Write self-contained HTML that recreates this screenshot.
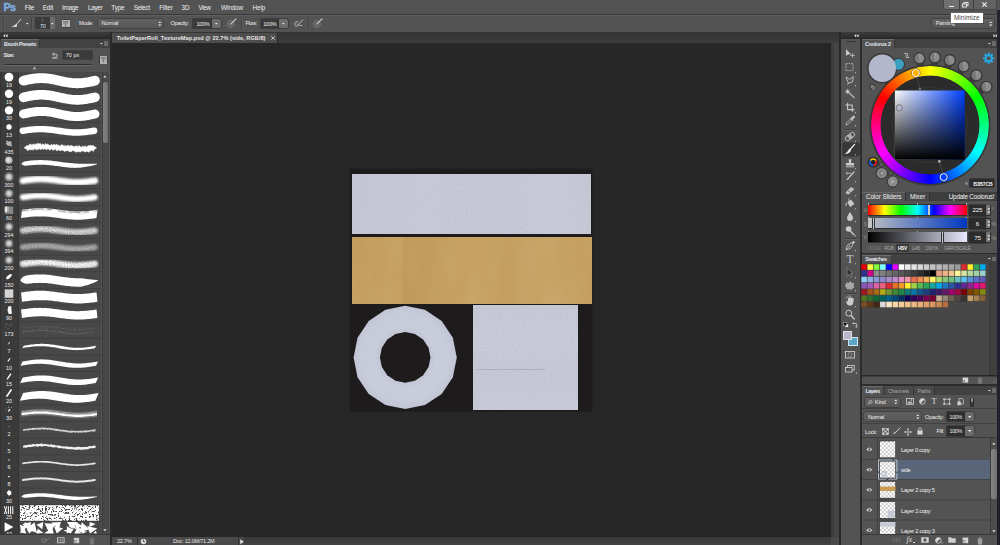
<!DOCTYPE html>
<html><head><meta charset="utf-8"><title>Photoshop</title><style>
*{margin:0;padding:0;box-sizing:border-box}
html,body{width:1000px;height:545px;overflow:hidden;background:#272727;font-family:"Liberation Sans",sans-serif;}
body{position:relative;color:#e6e6e6;font-size:6px;line-height:1}
.a{position:absolute}
.t{position:absolute;white-space:nowrap;color:#e8e8e8;font-size:6px;line-height:7px}
.b{font-weight:bold}
.pn{position:absolute;background:#535353}
.tb{position:absolute;background:#424242}
.box{position:absolute;background:#3a3a3a;box-shadow:0 0 0 0.5px #2c2c2c}
.btn{position:absolute;background:#6a6a6a;box-shadow:0 0 0 0.5px #2e2e2e}
.dd{position:absolute;background:linear-gradient(#626262,#565656);box-shadow:0 0 0 0.5px #303030;border-radius:1.5px}
svg{position:absolute;overflow:visible}
</style></head><body>
<div class="a" style="left:0px;top:0px;width:1000px;height:14.5px;background:#535353;"></div>
<div class="t" style="left:3.6px;top:1.6px;font-size:10.8px;line-height:11px;font-weight:bold;color:#7fade0;letter-spacing:-0.9px;-webkit-text-stroke:0.4px #7fade0">Ps</div>
<div class="t" style="left:24.8px;top:3.7px;font-size:6.4px;letter-spacing:-0.278px;color:#efefef;line-height:8px">File</div>
<div class="t" style="left:42.7px;top:3.7px;font-size:6.4px;letter-spacing:-0.132px;color:#efefef;line-height:8px">Edit</div>
<div class="t" style="left:62px;top:3.7px;font-size:6.4px;letter-spacing:-0.278px;color:#efefef;line-height:8px">Image</div>
<div class="t" style="left:87.9px;top:3.7px;font-size:6.4px;letter-spacing:-0.282px;color:#efefef;line-height:8px">Layer</div>
<div class="t" style="left:111.3px;top:3.7px;font-size:6.4px;letter-spacing:-0.194px;color:#efefef;line-height:8px">Type</div>
<div class="t" style="left:133.8px;top:3.7px;font-size:6.4px;letter-spacing:-0.331px;color:#efefef;line-height:8px">Select</div>
<div class="t" style="left:159.2px;top:3.7px;font-size:6.4px;letter-spacing:-0.120px;color:#efefef;line-height:8px">Filter</div>
<div class="t" style="left:181.6px;top:3.7px;font-size:6.4px;letter-spacing:-0.091px;color:#efefef;line-height:8px">3D</div>
<div class="t" style="left:198.5px;top:3.7px;font-size:6.4px;letter-spacing:-0.439px;color:#efefef;line-height:8px">View</div>
<div class="t" style="left:221px;top:3.7px;font-size:6.4px;letter-spacing:-0.127px;color:#efefef;line-height:8px">Window</div>
<div class="t" style="left:252.5px;top:3.7px;font-size:6.4px;letter-spacing:-0.141px;color:#efefef;line-height:8px">Help</div>
<div class="a" style="left:943.5px;top:0px;width:52.5px;height:9px;background:#626262;box-shadow:0 0 0 0.5px #3a3a3a;border-top:0;border-radius:0 0 2px 2px"></div>
<div class="a" style="left:944px;top:0px;width:14.5px;height:8.6px;background:#707070;border-radius:0 0 0 2px"></div>
<div class="a" style="left:958.5px;top:0px;width:0.5px;height:9px;background:#3e3e3e;"></div>
<div class="a" style="left:972.5px;top:0px;width:0.5px;height:9px;background:#3e3e3e;"></div>
<div class="a" style="left:948.5px;top:5.5px;width:5px;height:1.2px;background:#f0f0f0;"></div>
<svg style="left:962px;top:2px" width="7" height="6" viewBox="0 0 7 6"><rect x="2" y="0.5" width="4" height="3" fill="none" stroke="#f0f0f0" stroke-width="0.9"/><rect x="0.5" y="2" width="4" height="3" fill="#626262" stroke="#f0f0f0" stroke-width="0.9"/></svg>
<svg style="left:981.5px;top:2px" width="5" height="5" viewBox="0 0 5 5"><path d="M0.3,0.3 L4.7,4.7 M4.7,0.3 L0.3,4.7" stroke="#f4f4f4" stroke-width="1.1"/></svg>
<div class="a" style="left:0px;top:14.3px;width:1000px;height:0.7px;background:#3a3a3a;"></div>
<div class="a" style="left:0px;top:15px;width:1000px;height:17px;background:#535353;"></div>
<div class="a" style="left:0px;top:15px;width:1000px;height:0.5px;background:#5e5e5e;"></div>
<div class="a" style="left:0px;top:31.7px;width:1000px;height:0.6px;background:#2e2e2e;"></div>
<div class="a" style="left:3.1px;top:18px;width:0.8px;height:11px;background:#424242;"></div>
<div class="a" style="left:3.9px;top:18px;width:0.4px;height:11px;background:#5b5b5b;"></div>
<svg style="left:0;top:0" width="30" height="32" viewBox="0 0 30 32"><path d="M20.8,19.3 L16.4,24.4" stroke="#d8d8d8" stroke-width="1.0" stroke-linecap="round"/><path d="M11.2,26.9 L16.6,26.7 C17.3,25.7 17.2,24.6 16.3,23.7 C15,25 13.4,26 11.2,26.9Z" fill="#e4e4e4"/></svg>
<svg style="left:25.6px;top:22.6px" width="3" height="2"><path d="M0,0 L2.6,0 L1.3,1.6Z" fill="#eee"/></svg>
<div class="a" style="left:31.0px;top:18px;width:0.8px;height:11px;background:#424242;"></div>
<div class="a" style="left:31.8px;top:18px;width:0.4px;height:11px;background:#5b5b5b;"></div>
<div class="a" style="left:35px;top:17.1px;width:19.6px;height:12.2px;background:#3b3b3b;border-radius:1.2px"></div>
<div class="a" style="left:50px;top:17.1px;width:4.6px;height:12.2px;background:#6c6c6c;border-radius:0 1.2px 1.2px 0"></div>
<svg style="left:50.9px;top:22.6px" width="3" height="2"><path d="M0,0 L2.6,0 L1.3,1.6Z" fill="#f4f4f4"/></svg>
<div class="t" style="left:39.9px;top:23.3px;font-size:5.4px;letter-spacing:-0.203px;color:#dde6f6;">70</div>
<div class="a" style="left:42.4px;top:18.3px;width:0.7px;height:3.6px;background:#555;"></div>
<div class="a" style="left:41.2px;top:20.4px;width:3.1px;height:0.6px;background:#555;"></div>
<div class="a" style="left:61.8px;top:19px;width:8.4px;height:8.5px;background:#3c3c3c;border-radius:0.8px"></div>
<div class="a" style="left:62.4px;top:19.6px;width:7.2px;height:7.3px;background:#b4b4b4;"></div>
<svg style="left:62.4px;top:19.6px" width="7.2" height="7.3" viewBox="0 0 7.2 7.3"><path d="M1,1.6 H6.2 M2,2.4 V4 M3.6,2.2 V5.6 M5.2,2.4 V4 M2.8,5.8 H4.4" stroke="#4a4a4a" stroke-width="0.6" fill="none"/></svg>
<div class="a" style="left:75.5px;top:18px;width:0.8px;height:11px;background:#424242;"></div>
<div class="a" style="left:76.3px;top:18px;width:0.4px;height:11px;background:#5b5b5b;"></div>
<div class="t" style="left:79.1px;top:19.8px;font-size:5.7px;letter-spacing:-0.368px;color:#ececec;">Mode:</div>
<div class="dd" style="left:97.8px;top:18.9px;width:65.6px;height:9.1px"></div>
<div class="t" style="left:101.5px;top:20.2px;font-size:5.6px;letter-spacing:-0.258px;color:#eaeaea;">Normal</div>
<svg style="left:158.4px;top:20.6px" width="4" height="6"><path d="M0.3,2 L1.8,0.4 L3.3,2Z M0.3,3.6 L1.8,5.2 L3.3,3.6Z" fill="#eee"/></svg>
<div class="t" style="left:170.6px;top:19.8px;font-size:5.7px;letter-spacing:-0.338px;color:#ececec;">Opacity:</div>
<div class="a" style="left:193px;top:18.9px;width:19px;height:8.9px;background:#3a3a3a;box-shadow:0 0 0 0.5px #2a2a2a"></div>
<div class="t" style="left:196.4px;top:20.5px;font-size:5.5px;letter-spacing:-0.267px;color:#f0f0f0;">100%</div>
<div class="a" style="left:212px;top:18.9px;width:9px;height:8.9px;background:#6c6c6c;box-shadow:0 0 0 0.5px #2a2a2a;border-radius:0 1.5px 1.5px 0"></div>
<svg style="left:215.2px;top:22.6px" width="3" height="2"><path d="M0,0 L2.6,0 L1.3,1.6Z" fill="#f4f4f4"/></svg>
<svg style="left:227px;top:18.4px" width="10" height="10" viewBox="0 0 10 10"><circle cx="3.8" cy="6" r="3.3" fill="none" stroke="#b4b4b4" stroke-width="0.7" stroke-dasharray="1.1 0.55"/><circle cx="3.8" cy="6" r="1.4" fill="none" stroke="#9c9c9c" stroke-width="0.5"/><path d="M3.8,6 L9,0.8" stroke="#d4d4d4" stroke-width="1.05" stroke-linecap="round"/></svg>
<div class="a" style="left:240.8px;top:18px;width:0.8px;height:11px;background:#424242;"></div>
<div class="a" style="left:241.60000000000002px;top:18px;width:0.4px;height:11px;background:#5b5b5b;"></div>
<div class="t" style="left:245.5px;top:19.8px;font-size:5.7px;letter-spacing:-0.484px;color:#ececec;">Flow:</div>
<div class="a" style="left:260.8px;top:18.9px;width:18.4px;height:8.9px;background:#3a3a3a;box-shadow:0 0 0 0.5px #2a2a2a"></div>
<div class="t" style="left:263.3px;top:20.5px;font-size:5.5px;letter-spacing:-0.267px;color:#f0f0f0;">100%</div>
<div class="a" style="left:279.2px;top:18.9px;width:8.8px;height:8.9px;background:#6c6c6c;box-shadow:0 0 0 0.5px #2a2a2a;border-radius:0 1.5px 1.5px 0"></div>
<svg style="left:282.3px;top:22.6px" width="3" height="2"><path d="M0,0 L2.6,0 L1.3,1.6Z" fill="#f4f4f4"/></svg>
<svg style="left:294px;top:18.6px" width="10" height="9.5" viewBox="0 0 10 9.5"><path d="M3.6,2.6 C1.6,2.4 0.5,3.9 0.7,5.4 C0.9,6.9 2.4,7.6 3.8,6.9 M3.4,5 C4.4,6.4 5.8,6.6 7.8,6.4 M4.4,5.4 L8.8,0.8" stroke="#d6d6d6" stroke-width="0.8" fill="none" stroke-linecap="round"/></svg>
<div class="a" style="left:308.0px;top:18px;width:0.8px;height:11px;background:#424242;"></div>
<div class="a" style="left:308.8px;top:18px;width:0.4px;height:11px;background:#5b5b5b;"></div>
<svg style="left:313.2px;top:18.4px" width="10" height="10" viewBox="0 0 10 10"><circle cx="3.8" cy="6" r="3.3" fill="none" stroke="#b4b4b4" stroke-width="0.7" stroke-dasharray="1.1 0.55"/><circle cx="3.8" cy="6" r="1.4" fill="none" stroke="#9c9c9c" stroke-width="0.5"/><path d="M3.8,6 L9,0.8" stroke="#d4d4d4" stroke-width="1.05" stroke-linecap="round"/></svg>
<div class="dd" style="left:932px;top:18.8px;width:62px;height:9.4px"></div>
<div class="t" style="left:935.8px;top:20.4px;font-size:5.6px;letter-spacing:-0.180px;color:#eaeaea;">Painting</div>
<svg style="left:988.5px;top:20.6px" width="4" height="6"><path d="M0.3,2 L1.8,0.4 L3.3,2Z M0.3,3.6 L1.8,5.2 L3.3,3.6Z" fill="#eee"/></svg>
<div class="a" style="left:951px;top:13px;width:31.5px;height:9.5px;background:#ffffff;box-shadow:0 0 0 0.5px #767676,0.6px 0.6px 1px rgba(0,0,0,.45)"></div>
<div class="t" style="left:954px;top:14.1px;font-size:6.4px;letter-spacing:0.044px;color:#4a4a4a;">Minimize</div>
<div class="a" style="left:997.6px;top:9.6px;width:2.4px;height:23px;background:#25232c;"></div>
<div class="a" style="left:0px;top:32.3px;width:110px;height:6.2px;background:#333;background:linear-gradient(#3c3c3c,#2c2c2c)"></div>
<svg style="left:3px;top:34px" width="5" height="3.4" viewBox="0 0 5 3.4"><path d="M2.2,0 L0.2,1.7 L2.2,3.4Z M4.6,0 L2.6,1.7 L4.6,3.4Z" fill="#e0e0e0"/></svg>
<div class="a" style="left:0px;top:38.5px;width:110px;height:9.5px;background:#424242;"></div>
<div class="a" style="left:0.5px;top:39px;width:39.7px;height:9.2px;background:#535353;border-radius:1px 1px 0 0;border-top:0.5px solid #6a6a6a;border-right:0.5px solid #383838"></div>
<div class="t" style="left:4.1px;top:41px;font-size:5.4px;letter-spacing:-0.355px;color:#e2e8f2;font-weight:bold;">Brush Presets</div>
<svg style="left:100.3px;top:42.6px" width="3" height="2"><path d="M0,0 L2.6,0 L1.3,1.6Z" fill="#ddd"/></svg>
<div class="a" style="left:104px;top:41.2px;width:4px;height:4.6px;background:#6a6a6a;"></div>
<div class="a" style="left:0px;top:48px;width:110px;height:497px;background:#535353;"></div>
<div class="t" style="left:3.6px;top:51.6px;font-size:5.4px;letter-spacing:-0.441px;color:#e8e8e8;font-weight:bold;">Size:</div>
<svg style="left:50.5px;top:50.5px" width="8" height="8" viewBox="0 0 8 8"><path d="M2.2,3.2 H5 C6.6,3.2 6.6,6.4 5,6.4 H1.6" stroke="#e0e0e0" stroke-width="0.75" fill="none"/><path d="M3.2,1.6 L1.4,3.2 L3.2,4.8" stroke="#e0e0e0" stroke-width="0.75" fill="none"/><path d="M1,7.4 H7" stroke="#d0d0d0" stroke-width="0.5"/></svg>
<div class="a" style="left:63px;top:50.5px;width:29px;height:8.4px;background:#3a3a3a;box-shadow:0 0 0 0.5px #2e2e2e"></div>
<div class="t" style="left:65.8px;top:52.1px;font-size:5.5px;letter-spacing:0.009px;color:#f0f0f0;">70 px</div>
<div class="a" style="left:99px;top:55.8px;width:9px;height:8.6px;background:#3c3c3c;border-radius:0.8px"></div>
<div class="a" style="left:99.6px;top:56.4px;width:7.8px;height:7.4px;background:#b4b4b4;"></div>
<svg style="left:99.8px;top:56.4px" width="7.2" height="7.3" viewBox="0 0 7.2 7.3"><path d="M1,1.6 H6.2 M2,2.4 V4 M3.6,2.2 V5.6 M5.2,2.4 V4 M2.8,5.8 H4.4" stroke="#4a4a4a" stroke-width="0.6" fill="none"/></svg>
<div class="a" style="left:4px;top:64.2px;width:88px;height:0.9px;background:#2e2e2e;"></div>
<div class="a" style="left:4px;top:65.1px;width:88px;height:0.5px;background:#686868;"></div>
<svg style="left:31.5px;top:65.6px" width="5" height="4" viewBox="0 0 5 4"><path d="M2.5,0.2 L4.6,3.4 H0.4Z" fill="#b4b4b4" stroke="#444" stroke-width="0.3"/></svg>
<div class="a" style="left:0.8px;top:72.4px;width:100.7px;height:461.6px;background:#484848;"></div>
<div class="a" style="left:0px;top:72.4px;width:17.7px;height:461.6px;background:#3b3b3b;"></div>
<div class="a" style="left:0px;top:72.4px;width:0.8px;height:461.6px;background:#333;"></div>
<div class="a" style="left:17.7px;top:72.4px;width:0.5px;height:461.6px;background:#353535;"></div>
<div class="a" style="left:101.5px;top:72.4px;width:7.5px;height:461.6px;background:#484848;border-left:0.5px solid #3a3a3a"></div>
<svg style="left:103.3px;top:74.6px" width="4" height="3"><path d="M0.2,2.4 L1.9,0.4 L3.6,2.4Z" fill="#e0e0e0"/></svg>
<svg style="left:103.3px;top:529.3px" width="4" height="3"><path d="M0.2,0.3 L1.9,2.3 L3.6,0.3Z" fill="#e0e0e0"/></svg>
<div class="a" style="left:102.6px;top:82px;width:5.8px;height:61px;background:#7a7a7a;border-radius:2px;background:linear-gradient(90deg,#848484,#707070)"></div>
<svg width="0" height="0" style="left:0;top:0"><defs>
<filter id="sf" x="-10%" y="-80%" width="120%" height="260%"><feGaussianBlur stdDeviation="1.25"/></filter>
<filter id="sf2" x="-10%" y="-80%" width="120%" height="260%"><feGaussianBlur stdDeviation="0.9"/></filter>
<filter id="rough" x="-5%" y="-50%" width="110%" height="200%"><feTurbulence type="fractalNoise" baseFrequency="0.5" numOctaves="2" seed="3"/><feDisplacementMap in="SourceGraphic" scale="3.2" xChannelSelector="R" yChannelSelector="G"/></filter>
<filter id="rough2" x="-5%" y="-50%" width="110%" height="200%"><feTurbulence type="fractalNoise" baseFrequency="1.1" numOctaves="1" seed="5"/><feDisplacementMap in="SourceGraphic" scale="1.5"/></filter>
<filter id="speck" x="-5%" y="-60%" width="110%" height="220%"><feGaussianBlur stdDeviation="1.25" result="b"/><feTurbulence type="fractalNoise" baseFrequency="0.95" numOctaves="2" seed="8" result="n"/><feColorMatrix in="n" type="matrix" values="0 0 0 0 1  0 0 0 0 1  0 0 0 0 1  1.3 0 0 0 0.12" result="m"/><feComposite in="b" in2="m" operator="in"/></filter>
<filter id="tex" x="0" y="0" width="100%" height="100%"><feTurbulence type="fractalNoise" baseFrequency="0.55" numOctaves="3" seed="11" result="n"/><feColorMatrix in="n" type="matrix" values="0 0 0 0 1  0 0 0 0 1  0 0 0 0 1  9 0 0 0 -3.1"/><feComposite in2="SourceGraphic" operator="in"/></filter>
</defs></svg>
<div class="a" style="left:0;top:0;width:110px;height:534px;overflow:hidden"><svg style="left:0;top:0" width="110" height="534" viewBox="0 0 110 534"><rect x="0.8" y="88.63" width="100.7" height="0.6" fill="#3a3a3a"/><circle cx="9.0" cy="77.10" r="4.4" fill="#fff"/><text x="9.0" y="87.00" font-size="5.3" fill="#f0f0f0" text-anchor="middle" font-family="Liberation Sans, sans-serif">19</text><path transform="translate(0,72.40)" d="M23.50,8.30 L24.99,7.97 L26.48,7.64 L27.97,7.32 L29.46,7.03 L30.95,6.75 L32.44,6.50 L33.93,6.28 L35.42,6.09 L36.91,5.94 L38.40,5.84 L39.89,5.77 L41.38,5.75 L42.86,5.77 L44.35,5.84 L45.84,5.94 L47.33,6.09 L48.82,6.28 L50.31,6.50 L51.80,6.75 L53.29,7.03 L54.78,7.32 L56.27,7.64 L57.76,7.97 L59.25,8.30 L60.74,8.63 L62.23,8.96 L63.72,9.28 L65.21,9.58 L66.70,9.85 L68.19,10.10 L69.68,10.32 L71.17,10.51 L72.66,10.66 L74.15,10.76 L75.64,10.83 L77.12,10.85 L78.61,10.83 L80.10,10.76 L81.59,10.66 L83.08,10.51 L84.57,10.32 L86.06,10.10 L87.55,9.85 L89.04,9.58 L90.53,9.28 L92.02,8.96 L93.51,8.63 L95.00,8.30" stroke="#fff" stroke-width="9.8" stroke-linecap="round" stroke-linejoin="round" fill="none"/><rect x="0.8" y="105.26" width="100.7" height="0.6" fill="#3a3a3a"/><circle cx="9.0" cy="93.73" r="4.2" fill="#fff"/><text x="9.0" y="103.63" font-size="5.3" fill="#f0f0f0" text-anchor="middle" font-family="Liberation Sans, sans-serif">19</text><path transform="translate(0,89.03)" d="M23.50,8.30 L24.99,7.97 L26.48,7.64 L27.97,7.32 L29.46,7.03 L30.95,6.75 L32.44,6.50 L33.93,6.28 L35.42,6.09 L36.91,5.94 L38.40,5.84 L39.89,5.77 L41.38,5.75 L42.86,5.77 L44.35,5.84 L45.84,5.94 L47.33,6.09 L48.82,6.28 L50.31,6.50 L51.80,6.75 L53.29,7.03 L54.78,7.32 L56.27,7.64 L57.76,7.97 L59.25,8.30 L60.74,8.63 L62.23,8.96 L63.72,9.28 L65.21,9.58 L66.70,9.85 L68.19,10.10 L69.68,10.32 L71.17,10.51 L72.66,10.66 L74.15,10.76 L75.64,10.83 L77.12,10.85 L78.61,10.83 L80.10,10.76 L81.59,10.66 L83.08,10.51 L84.57,10.32 L86.06,10.10 L87.55,9.85 L89.04,9.58 L90.53,9.28 L92.02,8.96 L93.51,8.63 L95.00,8.30" stroke="#fff" stroke-width="9.6" stroke-linecap="round" stroke-linejoin="round" fill="none"/><rect x="0.8" y="121.89" width="100.7" height="0.6" fill="#3a3a3a"/><circle cx="9.0" cy="110.36" r="4.2" fill="#fff"/><text x="9.0" y="120.26" font-size="5.3" fill="#f0f0f0" text-anchor="middle" font-family="Liberation Sans, sans-serif">30</text><path transform="translate(0,105.66)" d="M23.50,8.30 L24.99,7.97 L26.48,7.64 L27.97,7.32 L29.46,7.03 L30.95,6.75 L32.44,6.50 L33.93,6.28 L35.42,6.09 L36.91,5.94 L38.40,5.84 L39.89,5.77 L41.38,5.75 L42.86,5.77 L44.35,5.84 L45.84,5.94 L47.33,6.09 L48.82,6.28 L50.31,6.50 L51.80,6.75 L53.29,7.03 L54.78,7.32 L56.27,7.64 L57.76,7.97 L59.25,8.30 L60.74,8.63 L62.23,8.96 L63.72,9.28 L65.21,9.58 L66.70,9.85 L68.19,10.10 L69.68,10.32 L71.17,10.51 L72.66,10.66 L74.15,10.76 L75.64,10.83 L77.12,10.85 L78.61,10.83 L80.10,10.76 L81.59,10.66 L83.08,10.51 L84.57,10.32 L86.06,10.10 L87.55,9.85 L89.04,9.58 L90.53,9.28 L92.02,8.96 L93.51,8.63 L95.00,8.30" stroke="#fff" stroke-width="9.0" stroke-linecap="round" stroke-linejoin="round" fill="none"/><rect x="0.8" y="138.52" width="100.7" height="0.6" fill="#3a3a3a"/><circle cx="9.0" cy="126.99" r="2.7" fill="#fff"/><text x="9.0" y="136.89" font-size="5.3" fill="#f0f0f0" text-anchor="middle" font-family="Liberation Sans, sans-serif">13</text><path transform="translate(0,122.29)" d="M22.80,8.50 L24.29,8.28 L25.78,8.06 L27.26,7.85 L28.75,7.65 L30.24,7.47 L31.73,7.30 L33.21,7.15 L34.70,7.03 L36.19,6.93 L37.68,6.86 L39.16,6.81 L40.65,6.80 L42.14,6.81 L43.62,6.86 L45.11,6.93 L46.60,7.03 L48.09,7.15 L49.58,7.30 L51.06,7.47 L52.55,7.65 L54.04,7.85 L55.53,8.06 L57.01,8.28 L58.50,8.50 L59.99,8.72 L61.47,8.94 L62.96,9.15 L64.45,9.35 L65.94,9.53 L67.42,9.70 L68.91,9.85 L70.40,9.97 L71.89,10.07 L73.38,10.14 L74.86,10.19 L76.35,10.20 L77.84,10.19 L79.33,10.14 L80.81,10.07 L82.30,9.97 L83.79,9.85 L85.28,9.70 L86.76,9.53 L88.25,9.35 L89.74,9.15 L91.23,8.94 L92.71,8.72 L94.20,8.50" stroke="#fff" stroke-width="6.4" stroke-linecap="round" stroke-linejoin="round" fill="none"/><rect x="0.8" y="155.15" width="100.7" height="0.6" fill="#3a3a3a"/><g filter="url(#rough)"><circle cx="9.0" cy="143.62" r="2.4" fill="#b4b4b4"/><circle cx="7.0" cy="141.42" r="1" fill="#aaa"/><circle cx="11.2" cy="145.42" r="1" fill="#aaa"/><circle cx="10.6" cy="141.22" r="0.7" fill="#999"/></g><text x="9.0" y="153.52" font-size="5.3" fill="#f0f0f0" text-anchor="middle" font-family="Liberation Sans, sans-serif">435</text><path transform="translate(0,138.92)" d="M24.00,8.90 L24.81,8.36 L25.61,7.84 L26.42,6.95 L27.22,6.46 L28.03,6.95 L28.83,6.66 L29.64,5.33 L30.44,5.02 L31.25,6.55 L32.06,5.18 L32.86,6.21 L33.67,4.89 L34.47,6.25 L35.28,4.83 L36.08,5.54 L36.89,4.75 L37.69,4.46 L38.50,4.55 L39.31,4.97 L40.11,4.30 L40.92,5.45 L41.72,6.14 L42.53,4.87 L43.33,5.31 L44.14,5.89 L44.94,6.03 L45.75,4.40 L46.56,6.20 L47.36,4.93 L48.17,5.74 L48.97,6.01 L49.78,6.34 L50.58,6.29 L51.39,5.37 L52.19,6.06 L53.00,6.02 L53.81,5.44 L54.61,5.48 L55.42,6.63 L56.22,5.01 L57.03,6.91 L57.83,5.57 L58.64,7.15 L59.44,6.56 L60.25,7.30 L61.06,5.99 L61.86,5.88 L62.67,6.01 L63.47,6.99 L64.28,6.44 L65.08,7.85 L65.89,6.34 L66.69,7.67 L67.50,6.39 L68.31,6.32 L69.11,7.29 L69.92,7.02 L70.72,6.69 L71.53,6.64 L72.33,7.37 L73.14,6.75 L73.94,8.21 L74.75,7.41 L75.56,7.37 L76.36,6.79 L77.17,7.02 L77.97,8.66 L78.78,6.70 L79.58,6.89 L80.39,7.95 L81.19,8.60 L82.00,7.26 L82.81,7.52 L83.61,8.18 L84.42,7.05 L85.22,7.32 L86.03,7.64 L86.83,8.23 L87.64,6.99 L88.44,6.65 L89.25,6.73 L90.06,6.80 L90.86,6.28 L91.67,6.69 L92.47,6.74 L93.28,6.63 L94.08,7.32 L94.89,8.15 L95.69,8.11 L96.50,8.90 L96.50,8.90 L95.69,9.42 L94.89,10.50 L94.08,10.40 L93.28,12.61 L92.47,11.48 L91.67,11.16 L90.86,12.33 L90.06,11.60 L89.25,13.12 L88.44,13.21 L87.64,12.54 L86.83,12.67 L86.03,12.56 L85.22,13.02 L84.42,12.85 L83.61,12.34 L82.81,12.34 L82.00,11.74 L81.19,12.35 L80.39,13.34 L79.58,12.80 L78.78,12.59 L77.97,13.23 L77.17,12.42 L76.36,13.28 L75.56,13.28 L74.75,12.34 L73.94,11.64 L73.14,11.98 L72.33,11.57 L71.53,12.76 L70.72,12.69 L69.92,12.52 L69.11,12.71 L68.31,11.98 L67.50,11.54 L66.69,11.78 L65.89,12.38 L65.08,12.09 L64.28,12.61 L63.47,11.47 L62.67,11.40 L61.86,11.32 L61.06,11.35 L60.25,11.78 L59.44,11.49 L58.64,10.42 L57.83,11.92 L57.03,11.24 L56.22,11.64 L55.42,9.85 L54.61,10.75 L53.81,10.72 L53.00,11.59 L52.19,10.41 L51.39,10.18 L50.58,10.66 L49.78,11.27 L48.97,10.55 L48.17,9.83 L47.36,10.24 L46.56,10.91 L45.75,10.37 L44.94,9.87 L44.14,10.00 L43.33,10.77 L42.53,9.64 L41.72,10.07 L40.92,10.34 L40.11,10.95 L39.31,9.19 L38.50,10.43 L37.69,10.65 L36.89,10.54 L36.08,11.03 L35.28,9.91 L34.47,9.49 L33.67,11.37 L32.86,9.95 L32.06,11.41 L31.25,10.41 L30.44,11.13 L29.64,10.16 L28.83,11.45 L28.03,11.19 L27.22,11.52 L26.42,10.03 L25.61,9.53 L24.81,9.40 L24.00,8.90Z" fill="#fff" stroke="#fff" stroke-width="0.5" stroke-linejoin="round"/><rect x="0.8" y="171.78" width="100.7" height="0.6" fill="#3a3a3a"/><circle cx="9.0" cy="160.25" r="3.6" fill="#a8a8a8"/><circle cx="8.2" cy="159.85" r="2.6" fill="#e8e8e8" filter="url(#sf2)"/><text x="9.0" y="170.15" font-size="5.3" fill="#f0f0f0" text-anchor="middle" font-family="Liberation Sans, sans-serif">20</text><path transform="translate(0,155.55)" d="M21.47,8.25 L22.87,6.81 L24.37,5.99 L25.93,5.59 L27.52,5.39 L29.12,5.21 L30.72,5.04 L32.32,4.90 L33.93,4.78 L35.54,4.68 L37.15,4.61 L38.76,4.56 L40.38,4.55 L41.99,4.56 L43.60,4.61 L45.21,4.68 L46.82,4.78 L48.43,4.90 L50.03,5.04 L51.63,5.21 L53.23,5.39 L54.82,5.59 L56.41,5.79 L57.99,6.01 L59.56,6.22 L61.13,6.44 L62.70,6.65 L64.26,6.85 L65.81,7.04 L67.36,7.22 L68.91,7.38 L70.45,7.52 L71.99,7.63 L73.53,7.73 L75.06,7.83 L76.59,7.97 L78.12,8.09 L79.66,8.18 L81.21,8.25 L82.75,8.29 L84.31,8.32 L85.87,8.32 L87.43,8.31 L89.00,8.29 L90.58,8.27 L92.17,8.24 L93.76,8.23 L95.36,8.26 L96.97,8.25 L97.03,8.75 L95.49,9.18 L93.95,9.62 L92.39,10.02 L90.83,10.38 L89.27,10.72 L87.69,11.02 L86.11,11.30 L84.53,11.54 L82.93,11.76 L81.34,11.94 L79.73,12.09 L78.12,12.21 L76.51,12.30 L74.90,12.35 L73.29,12.32 L71.68,12.22 L70.07,12.10 L68.47,11.96 L66.87,11.79 L65.27,11.61 L63.68,11.41 L62.09,11.21 L60.51,10.99 L58.94,10.78 L57.37,10.56 L55.80,10.35 L54.24,10.15 L52.69,9.96 L51.14,9.78 L49.59,9.62 L48.05,9.48 L46.51,9.37 L44.97,9.27 L43.44,9.20 L41.91,9.16 L40.38,9.15 L38.84,9.16 L37.31,9.20 L35.78,9.27 L34.24,9.37 L32.70,9.48 L31.16,9.62 L29.61,9.78 L28.06,9.96 L26.51,10.15 L24.92,10.15 L23.27,9.76 L21.53,8.75Z" fill="#fff"/><rect x="0.8" y="188.41" width="100.7" height="0.6" fill="#3a3a3a"/><circle cx="9.0" cy="176.88" r="3.6" fill="#d4d4d4" filter="url(#sf2)"/><text x="9.0" y="186.78" font-size="5.3" fill="#f0f0f0" text-anchor="middle" font-family="Liberation Sans, sans-serif">300</text><path transform="translate(0,172.18)" d="M23.00,8.50 L24.50,8.28 L25.99,8.07 L27.49,7.87 L28.98,7.67 L30.48,7.50 L31.98,7.33 L33.47,7.19 L34.97,7.07 L36.46,6.98 L37.96,6.91 L39.45,6.86 L40.95,6.85 L42.45,6.86 L43.94,6.91 L45.44,6.98 L46.93,7.07 L48.43,7.19 L49.92,7.33 L51.42,7.50 L52.92,7.67 L54.41,7.87 L55.91,8.07 L57.40,8.28 L58.90,8.50 L60.40,8.72 L61.89,8.93 L63.39,9.13 L64.88,9.32 L66.38,9.50 L67.88,9.67 L69.37,9.81 L70.87,9.93 L72.36,10.02 L73.86,10.09 L75.35,10.14 L76.85,10.15 L78.35,10.14 L79.84,10.09 L81.34,10.02 L82.83,9.93 L84.33,9.81 L85.82,9.67 L87.32,9.50 L88.82,9.33 L90.31,9.13 L91.81,8.93 L93.30,8.72 L94.80,8.50" stroke="#fff" stroke-width="6.6" stroke-linecap="round" fill="none" filter="url(#sf)"/><rect x="0.8" y="205.04" width="100.7" height="0.6" fill="#3a3a3a"/><circle cx="9.0" cy="193.51" r="3.4" fill="#d4d4d4" filter="url(#sf2)"/><text x="9.0" y="203.41" font-size="5.3" fill="#f0f0f0" text-anchor="middle" font-family="Liberation Sans, sans-serif">100</text><path transform="translate(0,188.81)" d="M23.00,8.50 L24.50,8.28 L25.99,8.07 L27.49,7.87 L28.98,7.67 L30.48,7.50 L31.98,7.33 L33.47,7.19 L34.97,7.07 L36.46,6.98 L37.96,6.91 L39.45,6.86 L40.95,6.85 L42.45,6.86 L43.94,6.91 L45.44,6.98 L46.93,7.07 L48.43,7.19 L49.92,7.33 L51.42,7.50 L52.92,7.67 L54.41,7.87 L55.91,8.07 L57.40,8.28 L58.90,8.50 L60.40,8.72 L61.89,8.93 L63.39,9.13 L64.88,9.32 L66.38,9.50 L67.88,9.67 L69.37,9.81 L70.87,9.93 L72.36,10.02 L73.86,10.09 L75.35,10.14 L76.85,10.15 L78.35,10.14 L79.84,10.09 L81.34,10.02 L82.83,9.93 L84.33,9.81 L85.82,9.67 L87.32,9.50 L88.82,9.33 L90.31,9.13 L91.81,8.93 L93.30,8.72 L94.80,8.50" stroke="#fff" stroke-width="6.0" stroke-linecap="round" fill="none" filter="url(#sf)"/><rect x="0.8" y="221.67" width="100.7" height="0.6" fill="#3a3a3a"/><rect x="4.8" y="206.54" width="8.4" height="7.4" fill="#868686"/><rect x="4.8" y="206.54" width="2.4" height="5.6" fill="#e4e4e4"/><rect x="7.2" y="206.54" width="1.6" height="5" fill="#b0b0b0"/><text x="9.0" y="220.04" font-size="5.3" fill="#f0f0f0" text-anchor="middle" font-family="Liberation Sans, sans-serif">60</text><path transform="translate(0,205.44)" d="M22.00,4.40 L23.57,4.18 L25.15,3.97 L26.72,3.77 L28.29,3.58 L29.86,3.40 L31.44,3.23 L33.01,3.09 L34.58,2.97 L36.16,2.88 L37.73,2.81 L39.30,2.76 L40.88,2.75 L42.45,2.76 L44.02,2.81 L45.59,2.88 L47.17,2.97 L48.74,3.09 L50.31,3.23 L51.89,3.40 L53.46,3.58 L55.03,3.77 L56.60,3.97 L58.18,4.18 L59.75,4.40 L61.32,4.62 L62.90,4.83 L64.47,5.03 L66.04,5.22 L67.61,5.40 L69.19,5.57 L70.76,5.71 L72.33,5.83 L73.91,5.92 L75.48,5.99 L77.05,6.04 L78.62,6.05 L80.20,6.04 L81.77,5.99 L83.34,5.92 L84.92,5.83 L86.49,5.71 L88.06,5.57 L89.64,5.40 L91.21,5.23 L92.78,5.03 L94.35,4.83 L95.93,4.62 L97.50,4.40 L96.50,12.60 L94.93,12.82 L93.35,13.03 L91.78,13.23 L90.21,13.43 L88.64,13.60 L87.06,13.77 L85.49,13.91 L83.92,14.03 L82.34,14.12 L80.77,14.19 L79.20,14.24 L77.62,14.25 L76.05,14.24 L74.48,14.19 L72.91,14.12 L71.33,14.03 L69.76,13.91 L68.19,13.77 L66.61,13.60 L65.04,13.42 L63.47,13.23 L61.90,13.03 L60.32,12.82 L58.75,12.60 L57.18,12.38 L55.60,12.17 L54.03,11.97 L52.46,11.77 L50.89,11.60 L49.31,11.43 L47.74,11.29 L46.17,11.17 L44.59,11.08 L43.02,11.01 L41.45,10.96 L39.88,10.95 L38.30,10.96 L36.73,11.01 L35.16,11.08 L33.58,11.17 L32.01,11.29 L30.44,11.43 L28.86,11.60 L27.29,11.77 L25.72,11.97 L24.15,12.17 L22.57,12.38 L21.00,12.60Z" fill="#fff"/><path transform="translate(0,205.44)" d="M21.50,5.30 L23.07,5.08 L24.65,4.87 L26.22,4.67 L27.79,4.47 L29.36,4.30 L30.94,4.13 L32.51,3.99 L34.08,3.87 L35.66,3.78 L37.23,3.71 L38.80,3.66 L40.38,3.65 L41.95,3.66 L43.52,3.71 L45.09,3.78 L46.67,3.87 L48.24,3.99 L49.81,4.13 L51.39,4.30 L52.96,4.47 L54.53,4.67 L56.10,4.87 L57.68,5.08 L59.25,5.30 L60.82,5.52 L62.40,5.73 L63.97,5.93 L65.54,6.12 L67.11,6.30 L68.69,6.47 L70.26,6.61 L71.83,6.73 L73.41,6.82 L74.98,6.89 L76.55,6.94 L78.12,6.95 L79.70,6.94 L81.27,6.89 L82.84,6.82 L84.42,6.73 L85.99,6.61 L87.56,6.47 L89.14,6.30 L90.71,6.13 L92.28,5.93 L93.85,5.73 L95.43,5.52 L97.00,5.30" stroke="#4a4a4a" stroke-width="0.55" stroke-dasharray="7 3 12 4 5 6" fill="none"/><path transform="translate(0,205.44)" d="M21.50,6.20 L23.07,5.98 L24.65,5.77 L26.22,5.57 L27.79,5.38 L29.36,5.20 L30.94,5.03 L32.51,4.89 L34.08,4.77 L35.66,4.68 L37.23,4.61 L38.80,4.56 L40.38,4.55 L41.95,4.56 L43.52,4.61 L45.09,4.68 L46.67,4.77 L48.24,4.89 L49.81,5.03 L51.39,5.20 L52.96,5.38 L54.53,5.57 L56.10,5.77 L57.68,5.98 L59.25,6.20 L60.82,6.42 L62.40,6.63 L63.97,6.83 L65.54,7.02 L67.11,7.20 L68.69,7.37 L70.26,7.51 L71.83,7.63 L73.41,7.72 L74.98,7.79 L76.55,7.84 L78.12,7.85 L79.70,7.84 L81.27,7.79 L82.84,7.72 L84.42,7.63 L85.99,7.51 L87.56,7.37 L89.14,7.20 L90.71,7.03 L92.28,6.83 L93.85,6.63 L95.43,6.42 L97.00,6.20" stroke="#a8a8a8" stroke-width="0.45" stroke-dasharray="15 5 9 7" fill="none"/><rect x="0.8" y="238.30" width="100.7" height="0.6" fill="#3a3a3a"/><circle cx="9.0" cy="226.77" r="3.4" fill="#d4d4d4" filter="url(#sf2)"/><text x="9.0" y="236.67" font-size="5.3" fill="#f0f0f0" text-anchor="middle" font-family="Liberation Sans, sans-serif">294</text><path transform="translate(0,222.07)" d="M23.00,8.50 L24.50,8.28 L25.99,8.07 L27.49,7.87 L28.98,7.67 L30.48,7.50 L31.98,7.33 L33.47,7.19 L34.97,7.07 L36.46,6.98 L37.96,6.91 L39.45,6.86 L40.95,6.85 L42.45,6.86 L43.94,6.91 L45.44,6.98 L46.93,7.07 L48.43,7.19 L49.92,7.33 L51.42,7.50 L52.92,7.67 L54.41,7.87 L55.91,8.07 L57.40,8.28 L58.90,8.50 L60.40,8.72 L61.89,8.93 L63.39,9.13 L64.88,9.32 L66.38,9.50 L67.88,9.67 L69.37,9.81 L70.87,9.93 L72.36,10.02 L73.86,10.09 L75.35,10.14 L76.85,10.15 L78.35,10.14 L79.84,10.09 L81.34,10.02 L82.83,9.93 L84.33,9.81 L85.82,9.67 L87.32,9.50 L88.82,9.33 L90.31,9.13 L91.81,8.93 L93.30,8.72 L94.80,8.50" stroke="#fff" stroke-width="5.3" stroke-linecap="round" fill="none" filter="url(#sf)" opacity="0.39"/><path transform="translate(0,222.07)" d="M23.00,8.50 L24.50,8.28 L25.99,8.07 L27.49,7.87 L28.98,7.67 L30.48,7.50 L31.98,7.33 L33.47,7.19 L34.97,7.07 L36.46,6.98 L37.96,6.91 L39.45,6.86 L40.95,6.85 L42.45,6.86 L43.94,6.91 L45.44,6.98 L46.93,7.07 L48.43,7.19 L49.92,7.33 L51.42,7.50 L52.92,7.67 L54.41,7.87 L55.91,8.07 L57.40,8.28 L58.90,8.50 L60.40,8.72 L61.89,8.93 L63.39,9.13 L64.88,9.32 L66.38,9.50 L67.88,9.67 L69.37,9.81 L70.87,9.93 L72.36,10.02 L73.86,10.09 L75.35,10.14 L76.85,10.15 L78.35,10.14 L79.84,10.09 L81.34,10.02 L82.83,9.93 L84.33,9.81 L85.82,9.67 L87.32,9.50 L88.82,9.33 L90.31,9.13 L91.81,8.93 L93.30,8.72 L94.80,8.50" stroke="#fff" stroke-width="6.1" stroke-linecap="round" fill="none" filter="url(#speck)" opacity="0.7"/><rect x="0.8" y="254.93" width="100.7" height="0.6" fill="#3a3a3a"/><circle cx="9.0" cy="243.40" r="3.4" fill="#d4d4d4" filter="url(#sf2)"/><text x="9.0" y="253.30" font-size="5.3" fill="#f0f0f0" text-anchor="middle" font-family="Liberation Sans, sans-serif">394</text><path transform="translate(0,238.70)" d="M23.00,8.50 L24.50,8.28 L25.99,8.07 L27.49,7.87 L28.98,7.67 L30.48,7.50 L31.98,7.33 L33.47,7.19 L34.97,7.07 L36.46,6.98 L37.96,6.91 L39.45,6.86 L40.95,6.85 L42.45,6.86 L43.94,6.91 L45.44,6.98 L46.93,7.07 L48.43,7.19 L49.92,7.33 L51.42,7.50 L52.92,7.67 L54.41,7.87 L55.91,8.07 L57.40,8.28 L58.90,8.50 L60.40,8.72 L61.89,8.93 L63.39,9.13 L64.88,9.32 L66.38,9.50 L67.88,9.67 L69.37,9.81 L70.87,9.93 L72.36,10.02 L73.86,10.09 L75.35,10.14 L76.85,10.15 L78.35,10.14 L79.84,10.09 L81.34,10.02 L82.83,9.93 L84.33,9.81 L85.82,9.67 L87.32,9.50 L88.82,9.33 L90.31,9.13 L91.81,8.93 L93.30,8.72 L94.80,8.50" stroke="#fff" stroke-width="5.3" stroke-linecap="round" fill="none" filter="url(#sf)" opacity="0.23"/><path transform="translate(0,238.70)" d="M23.00,8.50 L24.50,8.28 L25.99,8.07 L27.49,7.87 L28.98,7.67 L30.48,7.50 L31.98,7.33 L33.47,7.19 L34.97,7.07 L36.46,6.98 L37.96,6.91 L39.45,6.86 L40.95,6.85 L42.45,6.86 L43.94,6.91 L45.44,6.98 L46.93,7.07 L48.43,7.19 L49.92,7.33 L51.42,7.50 L52.92,7.67 L54.41,7.87 L55.91,8.07 L57.40,8.28 L58.90,8.50 L60.40,8.72 L61.89,8.93 L63.39,9.13 L64.88,9.32 L66.38,9.50 L67.88,9.67 L69.37,9.81 L70.87,9.93 L72.36,10.02 L73.86,10.09 L75.35,10.14 L76.85,10.15 L78.35,10.14 L79.84,10.09 L81.34,10.02 L82.83,9.93 L84.33,9.81 L85.82,9.67 L87.32,9.50 L88.82,9.33 L90.31,9.13 L91.81,8.93 L93.30,8.72 L94.80,8.50" stroke="#fff" stroke-width="6.1" stroke-linecap="round" fill="none" filter="url(#speck)" opacity="0.42"/><rect x="0.8" y="271.56" width="100.7" height="0.6" fill="#3a3a3a"/><circle cx="9.0" cy="260.03" r="3.4" fill="#d4d4d4" filter="url(#sf2)"/><text x="9.0" y="269.93" font-size="5.3" fill="#f0f0f0" text-anchor="middle" font-family="Liberation Sans, sans-serif">200</text><path transform="translate(0,255.33)" d="M23.00,8.50 L24.50,8.28 L25.99,8.07 L27.49,7.87 L28.98,7.67 L30.48,7.50 L31.98,7.33 L33.47,7.19 L34.97,7.07 L36.46,6.98 L37.96,6.91 L39.45,6.86 L40.95,6.85 L42.45,6.86 L43.94,6.91 L45.44,6.98 L46.93,7.07 L48.43,7.19 L49.92,7.33 L51.42,7.50 L52.92,7.67 L54.41,7.87 L55.91,8.07 L57.40,8.28 L58.90,8.50 L60.40,8.72 L61.89,8.93 L63.39,9.13 L64.88,9.32 L66.38,9.50 L67.88,9.67 L69.37,9.81 L70.87,9.93 L72.36,10.02 L73.86,10.09 L75.35,10.14 L76.85,10.15 L78.35,10.14 L79.84,10.09 L81.34,10.02 L82.83,9.93 L84.33,9.81 L85.82,9.67 L87.32,9.50 L88.82,9.33 L90.31,9.13 L91.81,8.93 L93.30,8.72 L94.80,8.50" stroke="#fff" stroke-width="5.3" stroke-linecap="round" fill="none" filter="url(#sf)" opacity="0.55"/><path transform="translate(0,255.33)" d="M23.00,8.50 L24.50,8.28 L25.99,8.07 L27.49,7.87 L28.98,7.67 L30.48,7.50 L31.98,7.33 L33.47,7.19 L34.97,7.07 L36.46,6.98 L37.96,6.91 L39.45,6.86 L40.95,6.85 L42.45,6.86 L43.94,6.91 L45.44,6.98 L46.93,7.07 L48.43,7.19 L49.92,7.33 L51.42,7.50 L52.92,7.67 L54.41,7.87 L55.91,8.07 L57.40,8.28 L58.90,8.50 L60.40,8.72 L61.89,8.93 L63.39,9.13 L64.88,9.32 L66.38,9.50 L67.88,9.67 L69.37,9.81 L70.87,9.93 L72.36,10.02 L73.86,10.09 L75.35,10.14 L76.85,10.15 L78.35,10.14 L79.84,10.09 L81.34,10.02 L82.83,9.93 L84.33,9.81 L85.82,9.67 L87.32,9.50 L88.82,9.33 L90.31,9.13 L91.81,8.93 L93.30,8.72 L94.80,8.50" stroke="#fff" stroke-width="6.1" stroke-linecap="round" fill="none" filter="url(#speck)" opacity="1.0"/><rect x="0.8" y="288.19" width="100.7" height="0.6" fill="#3a3a3a"/><ellipse cx="9.0" cy="276.66" rx="3.5" ry="1.5" fill="#fff" transform="rotate(-42 9.0 276.66)"/><text x="9.0" y="286.56" font-size="5.3" fill="#f0f0f0" text-anchor="middle" font-family="Liberation Sans, sans-serif">150</text><path transform="translate(0,271.96)" d="M20.45,8.30 L21.77,6.09 L23.25,4.90 L24.79,3.94 L26.40,3.49 L28.06,3.27 L29.73,3.08 L31.41,2.91 L33.10,2.77 L34.78,2.65 L36.48,2.57 L38.18,2.52 L39.88,2.50 L41.57,2.52 L43.27,2.57 L44.97,2.65 L46.65,2.77 L48.34,2.91 L50.02,3.08 L51.69,3.27 L53.35,3.49 L55.00,3.71 L56.64,3.95 L58.27,4.20 L59.89,4.45 L61.50,4.70 L63.10,4.94 L64.68,5.17 L66.26,5.39 L67.83,5.59 L69.39,5.77 L70.94,5.93 L72.49,6.06 L74.03,6.16 L75.56,6.24 L77.09,6.28 L78.62,6.30 L80.16,6.28 L81.69,6.41 L83.25,6.64 L84.82,6.84 L86.41,7.04 L88.02,7.21 L89.64,7.38 L91.27,7.54 L92.93,7.71 L94.59,7.90 L96.28,8.14 L97.95,8.30 L98.05,8.90 L96.49,9.56 L94.95,10.28 L93.39,10.95 L91.81,11.56 L90.22,12.14 L88.61,12.68 L86.99,13.18 L85.34,13.65 L83.69,14.07 L82.01,14.46 L80.32,14.68 L78.62,14.70 L76.93,14.68 L75.23,14.63 L73.53,14.55 L71.85,14.43 L70.16,14.29 L68.48,14.12 L66.81,13.93 L65.15,13.71 L63.50,13.49 L61.86,13.25 L60.23,13.00 L58.61,12.75 L57.00,12.50 L55.40,12.26 L53.82,12.03 L52.24,11.81 L50.67,11.61 L49.11,11.43 L47.56,11.27 L46.01,11.14 L44.47,11.04 L42.94,10.96 L41.41,10.92 L39.88,10.90 L38.34,10.92 L36.81,10.96 L35.28,11.04 L33.74,11.14 L32.19,11.27 L30.64,11.43 L29.08,11.61 L27.51,11.81 L25.90,11.80 L24.20,11.31 L22.46,10.62 L20.55,8.90Z" fill="#fff"/><rect x="0.8" y="304.82" width="100.7" height="0.6" fill="#3a3a3a"/><rect x="4.7" y="289.39" width="8.6" height="8.4" fill="#d4d4d4"/><text x="9.0" y="303.19" font-size="5.3" fill="#f0f0f0" text-anchor="middle" font-family="Liberation Sans, sans-serif">200</text><path transform="translate(0,288.59)" d="M21.05,3.80 L22.62,3.58 L24.20,3.37 L25.77,3.17 L27.34,2.97 L28.91,2.80 L30.49,2.63 L32.06,2.49 L33.63,2.37 L35.21,2.28 L36.78,2.21 L38.35,2.16 L39.92,2.15 L41.50,2.16 L43.07,2.21 L44.64,2.28 L46.22,2.37 L47.79,2.49 L49.36,2.63 L50.94,2.80 L52.51,2.97 L54.08,3.17 L55.65,3.37 L57.23,3.58 L58.80,3.80 L60.37,4.02 L61.95,4.23 L63.52,4.43 L65.09,4.62 L66.66,4.80 L68.24,4.97 L69.81,5.11 L71.38,5.23 L72.96,5.32 L74.53,5.39 L76.10,5.44 L77.67,5.45 L79.25,5.44 L80.82,5.39 L82.39,5.32 L83.97,5.23 L85.54,5.11 L87.11,4.97 L88.69,4.80 L90.26,4.63 L91.83,4.43 L93.40,4.23 L94.98,4.02 L96.55,3.80 L97.45,13.20 L95.88,13.42 L94.30,13.63 L92.73,13.83 L91.16,14.03 L89.59,14.20 L88.01,14.37 L86.44,14.51 L84.87,14.63 L83.29,14.72 L81.72,14.79 L80.15,14.84 L78.58,14.85 L77.00,14.84 L75.43,14.79 L73.86,14.72 L72.28,14.63 L70.71,14.51 L69.14,14.37 L67.56,14.20 L65.99,14.02 L64.42,13.83 L62.85,13.63 L61.27,13.42 L59.70,13.20 L58.13,12.98 L56.55,12.77 L54.98,12.57 L53.41,12.38 L51.84,12.20 L50.26,12.03 L48.69,11.89 L47.12,11.77 L45.54,11.68 L43.97,11.61 L42.40,11.56 L40.83,11.55 L39.25,11.56 L37.68,11.61 L36.11,11.68 L34.53,11.77 L32.96,11.89 L31.39,12.03 L29.81,12.20 L28.24,12.38 L26.67,12.57 L25.10,12.77 L23.52,12.98 L21.95,13.20Z" fill="#fff"/><rect x="0.8" y="321.45" width="100.7" height="0.6" fill="#3a3a3a"/><path d="M8.2,306.52 l3.0,-0.4 l0.7,7.6 l-3.0,0.5 l-1.4,-3.4z" fill="#f4f4f4"/><text x="9.0" y="319.82" font-size="5.3" fill="#f0f0f0" text-anchor="middle" font-family="Liberation Sans, sans-serif">90</text><path transform="translate(0,305.22)" d="M21.05,4.30 L22.62,4.08 L24.20,3.87 L25.77,3.67 L27.34,3.47 L28.91,3.30 L30.49,3.13 L32.06,2.99 L33.63,2.87 L35.21,2.78 L36.78,2.71 L38.35,2.66 L39.92,2.65 L41.50,2.66 L43.07,2.71 L44.64,2.78 L46.22,2.87 L47.79,2.99 L49.36,3.13 L50.94,3.30 L52.51,3.47 L54.08,3.67 L55.65,3.87 L57.23,4.08 L58.80,4.30 L60.37,4.52 L61.95,4.73 L63.52,4.93 L65.09,5.12 L66.66,5.30 L68.24,5.47 L69.81,5.61 L71.38,5.73 L72.96,5.82 L74.53,5.89 L76.10,5.94 L77.67,5.95 L79.25,5.94 L80.82,5.89 L82.39,5.82 L83.97,5.73 L85.54,5.61 L87.11,5.47 L88.69,5.30 L90.26,5.13 L91.83,4.93 L93.40,4.73 L94.98,4.52 L96.55,4.30 L97.45,12.70 L95.88,12.92 L94.30,13.13 L92.73,13.33 L91.16,13.53 L89.59,13.70 L88.01,13.87 L86.44,14.01 L84.87,14.13 L83.29,14.22 L81.72,14.29 L80.15,14.34 L78.58,14.35 L77.00,14.34 L75.43,14.29 L73.86,14.22 L72.28,14.13 L70.71,14.01 L69.14,13.87 L67.56,13.70 L65.99,13.52 L64.42,13.33 L62.85,13.13 L61.27,12.92 L59.70,12.70 L58.13,12.48 L56.55,12.27 L54.98,12.07 L53.41,11.88 L51.84,11.70 L50.26,11.53 L48.69,11.39 L47.12,11.27 L45.54,11.18 L43.97,11.11 L42.40,11.06 L40.83,11.05 L39.25,11.06 L37.68,11.11 L36.11,11.18 L34.53,11.27 L32.96,11.39 L31.39,11.53 L29.81,11.70 L28.24,11.88 L26.67,12.07 L25.10,12.27 L23.52,12.48 L21.95,12.70Z" fill="#fff"/><rect x="0.8" y="338.08" width="100.7" height="0.6" fill="#3a3a3a"/><circle cx="7.73" cy="324.21" r="0.35" fill="#8c8c8c"/><circle cx="10.09" cy="323.66" r="0.35" fill="#8c8c8c"/><circle cx="9.26" cy="325.71" r="0.35" fill="#8c8c8c"/><circle cx="5.82" cy="326.70" r="0.35" fill="#8c8c8c"/><circle cx="5.67" cy="326.19" r="0.35" fill="#8c8c8c"/><circle cx="5.90" cy="323.78" r="0.35" fill="#8c8c8c"/><circle cx="8.46" cy="328.94" r="0.35" fill="#8c8c8c"/><circle cx="6.29" cy="324.71" r="0.35" fill="#8c8c8c"/><circle cx="9.92" cy="329.78" r="0.35" fill="#8c8c8c"/><circle cx="9.56" cy="325.93" r="0.35" fill="#8c8c8c"/><circle cx="12.43" cy="323.48" r="0.35" fill="#8c8c8c"/><circle cx="11.58" cy="325.18" r="0.35" fill="#8c8c8c"/><circle cx="6.44" cy="323.97" r="0.35" fill="#8c8c8c"/><circle cx="7.62" cy="328.86" r="0.35" fill="#8c8c8c"/><circle cx="6.70" cy="327.22" r="0.35" fill="#8c8c8c"/><circle cx="10.00" cy="325.76" r="0.35" fill="#8c8c8c"/><text x="9.0" y="336.45" font-size="5.3" fill="#f0f0f0" text-anchor="middle" font-family="Liberation Sans, sans-serif">173</text><circle cx="61.37" cy="331.73" r="0.3" fill="#9a9a9a" opacity="0.69"/><circle cx="52.69" cy="329.90" r="0.3" fill="#9a9a9a" opacity="0.64"/><circle cx="54.17" cy="330.36" r="0.3" fill="#9a9a9a" opacity="0.47"/><circle cx="63.42" cy="328.75" r="0.3" fill="#9a9a9a" opacity="0.79"/><circle cx="75.10" cy="332.73" r="0.3" fill="#9a9a9a" opacity="0.56"/><circle cx="76.43" cy="331.91" r="0.3" fill="#9a9a9a" opacity="0.59"/><circle cx="24.70" cy="330.31" r="0.3" fill="#9a9a9a" opacity="0.79"/><circle cx="45.67" cy="326.88" r="0.3" fill="#9a9a9a" opacity="0.65"/><circle cx="63.33" cy="332.91" r="0.3" fill="#9a9a9a" opacity="0.59"/><circle cx="68.84" cy="328.61" r="0.3" fill="#9a9a9a" opacity="0.70"/><circle cx="69.96" cy="332.20" r="0.3" fill="#9a9a9a" opacity="0.54"/><circle cx="70.29" cy="330.67" r="0.3" fill="#9a9a9a" opacity="0.58"/><circle cx="34.51" cy="331.31" r="0.3" fill="#9a9a9a" opacity="0.41"/><circle cx="39.32" cy="329.64" r="0.3" fill="#9a9a9a" opacity="0.79"/><circle cx="27.43" cy="326.76" r="0.3" fill="#9a9a9a" opacity="0.76"/><circle cx="84.06" cy="330.71" r="0.3" fill="#9a9a9a" opacity="0.56"/><circle cx="48.89" cy="329.87" r="0.3" fill="#9a9a9a" opacity="0.44"/><circle cx="39.13" cy="328.49" r="0.3" fill="#9a9a9a" opacity="0.59"/><circle cx="64.60" cy="332.74" r="0.3" fill="#9a9a9a" opacity="0.53"/><circle cx="63.93" cy="331.02" r="0.3" fill="#9a9a9a" opacity="0.70"/><circle cx="59.04" cy="330.13" r="0.3" fill="#9a9a9a" opacity="0.80"/><circle cx="78.80" cy="331.54" r="0.3" fill="#9a9a9a" opacity="0.75"/><circle cx="49.80" cy="330.88" r="0.3" fill="#9a9a9a" opacity="0.38"/><circle cx="27.14" cy="331.01" r="0.3" fill="#9a9a9a" opacity="0.43"/><circle cx="46.40" cy="329.78" r="0.3" fill="#9a9a9a" opacity="0.40"/><circle cx="47.86" cy="329.04" r="0.3" fill="#9a9a9a" opacity="0.79"/><circle cx="65.96" cy="331.33" r="0.3" fill="#9a9a9a" opacity="0.53"/><circle cx="30.90" cy="330.73" r="0.3" fill="#9a9a9a" opacity="0.85"/><circle cx="55.89" cy="330.52" r="0.3" fill="#9a9a9a" opacity="0.52"/><circle cx="41.34" cy="329.06" r="0.3" fill="#9a9a9a" opacity="0.43"/><circle cx="25.04" cy="329.30" r="0.3" fill="#9a9a9a" opacity="0.62"/><circle cx="24.53" cy="329.99" r="0.3" fill="#9a9a9a" opacity="0.84"/><circle cx="84.56" cy="331.56" r="0.3" fill="#9a9a9a" opacity="0.43"/><circle cx="78.38" cy="333.42" r="0.3" fill="#9a9a9a" opacity="0.74"/><circle cx="45.11" cy="330.46" r="0.3" fill="#9a9a9a" opacity="0.78"/><circle cx="80.22" cy="327.92" r="0.3" fill="#9a9a9a" opacity="0.72"/><circle cx="37.98" cy="328.53" r="0.3" fill="#9a9a9a" opacity="0.36"/><circle cx="42.16" cy="329.00" r="0.3" fill="#9a9a9a" opacity="0.70"/><circle cx="90.25" cy="335.10" r="0.3" fill="#9a9a9a" opacity="0.83"/><circle cx="48.09" cy="327.32" r="0.3" fill="#9a9a9a" opacity="0.46"/><circle cx="36.11" cy="326.53" r="0.3" fill="#9a9a9a" opacity="0.77"/><circle cx="57.59" cy="327.87" r="0.3" fill="#9a9a9a" opacity="0.75"/><circle cx="29.18" cy="331.73" r="0.3" fill="#9a9a9a" opacity="0.73"/><circle cx="55.52" cy="328.52" r="0.3" fill="#9a9a9a" opacity="0.74"/><circle cx="45.80" cy="330.31" r="0.3" fill="#9a9a9a" opacity="0.55"/><circle cx="90.58" cy="330.71" r="0.3" fill="#9a9a9a" opacity="0.44"/><circle cx="31.56" cy="331.43" r="0.3" fill="#9a9a9a" opacity="0.42"/><circle cx="81.91" cy="330.34" r="0.3" fill="#9a9a9a" opacity="0.68"/><circle cx="46.99" cy="329.09" r="0.3" fill="#9a9a9a" opacity="0.84"/><circle cx="69.40" cy="331.85" r="0.3" fill="#9a9a9a" opacity="0.82"/><circle cx="53.36" cy="330.00" r="0.3" fill="#9a9a9a" opacity="0.48"/><circle cx="43.63" cy="327.84" r="0.3" fill="#9a9a9a" opacity="0.64"/><circle cx="40.85" cy="330.94" r="0.3" fill="#9a9a9a" opacity="0.53"/><circle cx="54.51" cy="332.13" r="0.3" fill="#9a9a9a" opacity="0.80"/><circle cx="53.42" cy="327.68" r="0.3" fill="#9a9a9a" opacity="0.61"/><circle cx="22.93" cy="330.33" r="0.3" fill="#9a9a9a" opacity="0.44"/><circle cx="23.36" cy="331.15" r="0.3" fill="#9a9a9a" opacity="0.71"/><circle cx="61.68" cy="332.28" r="0.3" fill="#9a9a9a" opacity="0.61"/><circle cx="62.23" cy="332.29" r="0.3" fill="#9a9a9a" opacity="0.47"/><circle cx="42.77" cy="329.90" r="0.3" fill="#9a9a9a" opacity="0.60"/><circle cx="62.20" cy="332.16" r="0.3" fill="#9a9a9a" opacity="0.66"/><circle cx="58.91" cy="329.50" r="0.3" fill="#9a9a9a" opacity="0.70"/><circle cx="54.45" cy="326.18" r="0.3" fill="#9a9a9a" opacity="0.70"/><circle cx="86.36" cy="332.01" r="0.3" fill="#9a9a9a" opacity="0.48"/><circle cx="62.42" cy="331.21" r="0.3" fill="#9a9a9a" opacity="0.41"/><circle cx="53.90" cy="329.03" r="0.3" fill="#9a9a9a" opacity="0.47"/><circle cx="27.69" cy="330.40" r="0.3" fill="#9a9a9a" opacity="0.43"/><circle cx="74.05" cy="328.82" r="0.3" fill="#9a9a9a" opacity="0.42"/><circle cx="86.39" cy="332.22" r="0.3" fill="#9a9a9a" opacity="0.55"/><circle cx="57.99" cy="333.77" r="0.3" fill="#9a9a9a" opacity="0.77"/><circle cx="33.39" cy="327.68" r="0.3" fill="#9a9a9a" opacity="0.45"/><circle cx="45.70" cy="328.69" r="0.3" fill="#9a9a9a" opacity="0.36"/><circle cx="61.82" cy="332.11" r="0.3" fill="#9a9a9a" opacity="0.66"/><circle cx="58.38" cy="330.50" r="0.3" fill="#9a9a9a" opacity="0.84"/><circle cx="78.91" cy="332.92" r="0.3" fill="#9a9a9a" opacity="0.37"/><circle cx="78.07" cy="332.71" r="0.3" fill="#9a9a9a" opacity="0.41"/><circle cx="53.41" cy="330.01" r="0.3" fill="#9a9a9a" opacity="0.42"/><circle cx="88.90" cy="330.12" r="0.3" fill="#9a9a9a" opacity="0.70"/><circle cx="28.45" cy="328.93" r="0.3" fill="#9a9a9a" opacity="0.39"/><circle cx="90.47" cy="329.52" r="0.3" fill="#9a9a9a" opacity="0.75"/><circle cx="29.41" cy="332.26" r="0.3" fill="#9a9a9a" opacity="0.58"/><circle cx="47.00" cy="330.14" r="0.3" fill="#9a9a9a" opacity="0.81"/><circle cx="40.51" cy="327.61" r="0.3" fill="#9a9a9a" opacity="0.40"/><circle cx="32.93" cy="328.85" r="0.3" fill="#9a9a9a" opacity="0.45"/><circle cx="43.71" cy="328.83" r="0.3" fill="#9a9a9a" opacity="0.60"/><circle cx="34.78" cy="327.68" r="0.3" fill="#9a9a9a" opacity="0.36"/><circle cx="40.37" cy="328.50" r="0.3" fill="#9a9a9a" opacity="0.44"/><circle cx="56.43" cy="328.04" r="0.3" fill="#9a9a9a" opacity="0.40"/><circle cx="81.26" cy="329.03" r="0.3" fill="#9a9a9a" opacity="0.55"/><circle cx="59.13" cy="330.44" r="0.3" fill="#9a9a9a" opacity="0.84"/><circle cx="47.33" cy="328.35" r="0.3" fill="#9a9a9a" opacity="0.55"/><circle cx="46.40" cy="326.87" r="0.3" fill="#9a9a9a" opacity="0.41"/><circle cx="27.78" cy="329.69" r="0.3" fill="#9a9a9a" opacity="0.39"/><circle cx="83.28" cy="332.67" r="0.3" fill="#9a9a9a" opacity="0.69"/><circle cx="42.14" cy="328.27" r="0.3" fill="#9a9a9a" opacity="0.43"/><circle cx="54.13" cy="331.32" r="0.3" fill="#9a9a9a" opacity="0.83"/><circle cx="91.86" cy="330.91" r="0.3" fill="#9a9a9a" opacity="0.50"/><circle cx="47.83" cy="332.93" r="0.3" fill="#9a9a9a" opacity="0.54"/><circle cx="55.91" cy="330.46" r="0.3" fill="#9a9a9a" opacity="0.35"/><circle cx="40.46" cy="330.39" r="0.3" fill="#9a9a9a" opacity="0.55"/><circle cx="25.42" cy="329.56" r="0.3" fill="#9a9a9a" opacity="0.64"/><circle cx="60.70" cy="331.59" r="0.3" fill="#9a9a9a" opacity="0.68"/><circle cx="74.31" cy="330.92" r="0.3" fill="#9a9a9a" opacity="0.84"/><circle cx="33.74" cy="329.89" r="0.3" fill="#9a9a9a" opacity="0.67"/><circle cx="26.39" cy="331.56" r="0.3" fill="#9a9a9a" opacity="0.72"/><circle cx="79.41" cy="330.62" r="0.3" fill="#9a9a9a" opacity="0.61"/><circle cx="59.30" cy="331.30" r="0.3" fill="#9a9a9a" opacity="0.64"/><circle cx="86.04" cy="328.87" r="0.3" fill="#9a9a9a" opacity="0.70"/><circle cx="38.89" cy="329.67" r="0.3" fill="#9a9a9a" opacity="0.40"/><circle cx="82.90" cy="332.83" r="0.3" fill="#9a9a9a" opacity="0.66"/><path transform="translate(0,321.85)" d="M23.00,10.40 L24.50,10.18 L25.99,9.97 L27.49,9.77 L28.98,9.57 L30.48,9.40 L31.98,9.23 L33.47,9.09 L34.97,8.97 L36.46,8.88 L37.96,8.81 L39.45,8.76 L40.95,8.75 L42.45,8.76 L43.94,8.81 L45.44,8.88 L46.93,8.97 L48.43,9.09 L49.92,9.23 L51.42,9.40 L52.92,9.57 L54.41,9.77 L55.91,9.97 L57.40,10.18 L58.90,10.40 L60.40,10.62 L61.89,10.83 L63.39,11.03 L64.88,11.22 L66.38,11.40 L67.88,11.57 L69.37,11.71 L70.87,11.83 L72.36,11.92 L73.86,11.99 L75.35,12.04 L76.85,12.05 L78.35,12.04 L79.84,11.99 L81.34,11.92 L82.83,11.83 L84.33,11.71 L85.82,11.57 L87.32,11.40 L88.82,11.23 L90.31,11.03 L91.81,10.83 L93.30,10.62 L94.80,10.40" stroke="#8e8e8e" stroke-width="0.5" stroke-dasharray="1.2 1.0" fill="none"/><path transform="translate(0,321.85)" d="M23.00,6.10 L24.50,5.88 L25.99,5.67 L27.49,5.47 L28.98,5.28 L30.48,5.10 L31.98,4.93 L33.47,4.79 L34.97,4.67 L36.46,4.58 L37.96,4.51 L39.45,4.46 L40.95,4.45 L42.45,4.46 L43.94,4.51 L45.44,4.58 L46.93,4.67 L48.43,4.79 L49.92,4.93 L51.42,5.10 L52.92,5.28 L54.41,5.47 L55.91,5.67 L57.40,5.88 L58.90,6.10 L60.40,6.32 L61.89,6.53 L63.39,6.73 L64.88,6.92 L66.38,7.10 L67.88,7.27 L69.37,7.41 L70.87,7.53 L72.36,7.62 L73.86,7.69 L75.35,7.74 L76.85,7.75 L78.35,7.74 L79.84,7.69 L81.34,7.62 L82.83,7.53 L84.33,7.41 L85.82,7.27 L87.32,7.10 L88.82,6.93 L90.31,6.73 L91.81,6.53 L93.30,6.32 L94.80,6.10" stroke="#707070" stroke-width="0.6" stroke-dasharray="2.2 1.4 0.8 1.2" fill="none"/><rect x="0.8" y="354.71" width="100.7" height="0.6" fill="#3a3a3a"/><path d="M8.38,344.08 L9.62,342.28" stroke="#fff" stroke-width="0.87" stroke-linecap="round"/><text x="9.0" y="353.08" font-size="5.3" fill="#f0f0f0" text-anchor="middle" font-family="Liberation Sans, sans-serif">7</text><path transform="translate(0,338.48)" d="M23.70,7.35 L25.21,7.09 L26.72,6.83 L28.23,6.58 L29.74,6.35 L31.25,6.13 L32.76,5.94 L34.27,5.76 L35.78,5.62 L37.29,5.50 L38.80,5.42 L40.31,5.37 L41.83,5.35 L43.34,5.37 L44.85,5.42 L46.36,5.50 L47.87,5.62 L49.38,5.76 L50.89,5.94 L52.40,6.13 L53.91,6.35 L55.42,6.58 L56.93,6.83 L58.44,7.09 L59.95,7.35 L61.46,7.61 L62.97,7.87 L64.48,8.12 L65.99,8.35 L67.50,8.57 L69.01,8.76 L70.52,8.94 L72.03,9.08 L73.54,9.20 L75.05,9.28 L76.56,9.33 L78.08,9.35 L79.59,9.33 L81.10,9.28 L82.61,9.20 L84.12,9.08 L85.63,8.94 L87.14,8.76 L88.65,8.57 L90.16,8.35 L91.67,8.12 L93.18,7.87 L94.69,7.61 L96.20,7.35 L94.80,9.65 L93.29,9.91 L91.78,10.17 L90.27,10.42 L88.76,10.65 L87.25,10.87 L85.74,11.06 L84.23,11.24 L82.72,11.38 L81.21,11.50 L79.70,11.58 L78.19,11.63 L76.67,11.65 L75.16,11.63 L73.65,11.58 L72.14,11.50 L70.63,11.38 L69.12,11.24 L67.61,11.06 L66.10,10.87 L64.59,10.65 L63.08,10.42 L61.57,10.17 L60.06,9.91 L58.55,9.65 L57.04,9.39 L55.53,9.13 L54.02,8.88 L52.51,8.65 L51.00,8.43 L49.49,8.24 L47.98,8.06 L46.47,7.92 L44.96,7.80 L43.45,7.72 L41.94,7.67 L40.42,7.65 L38.91,7.67 L37.40,7.72 L35.89,7.80 L34.38,7.92 L32.87,8.06 L31.36,8.24 L29.85,8.43 L28.34,8.65 L26.83,8.88 L25.32,9.13 L23.81,9.39 L22.30,9.65Z" fill="#fff"/><rect x="0.8" y="371.34" width="100.7" height="0.6" fill="#3a3a3a"/><path d="M8.07,361.16 L9.93,358.46" stroke="#fff" stroke-width="1.03" stroke-linecap="round"/><text x="9.0" y="369.71" font-size="5.3" fill="#f0f0f0" text-anchor="middle" font-family="Liberation Sans, sans-serif">10</text><path transform="translate(0,355.11)" d="M22.50,6.30 L24.07,6.03 L25.65,5.77 L27.22,5.52 L28.79,5.28 L30.36,5.05 L31.94,4.85 L33.51,4.67 L35.08,4.52 L36.66,4.41 L38.23,4.32 L39.80,4.27 L41.38,4.25 L42.95,4.27 L44.52,4.32 L46.09,4.41 L47.67,4.52 L49.24,4.67 L50.81,4.85 L52.39,5.05 L53.96,5.28 L55.53,5.52 L57.10,5.77 L58.68,6.03 L60.25,6.30 L61.82,6.57 L63.40,6.83 L64.97,7.08 L66.54,7.33 L68.11,7.55 L69.69,7.75 L71.26,7.93 L72.83,8.08 L74.41,8.19 L75.98,8.28 L77.55,8.33 L79.12,8.35 L80.70,8.33 L82.27,8.28 L83.84,8.19 L85.42,8.08 L86.99,7.93 L88.56,7.75 L90.14,7.55 L91.71,7.33 L93.28,7.08 L94.85,6.83 L96.43,6.57 L98.00,6.30 L96.00,10.70 L94.43,10.97 L92.85,11.23 L91.28,11.48 L89.71,11.73 L88.14,11.95 L86.56,12.15 L84.99,12.33 L83.42,12.48 L81.84,12.59 L80.27,12.68 L78.70,12.73 L77.12,12.75 L75.55,12.73 L73.98,12.68 L72.41,12.59 L70.83,12.48 L69.26,12.33 L67.69,12.15 L66.11,11.95 L64.54,11.73 L62.97,11.48 L61.40,11.23 L59.82,10.97 L58.25,10.70 L56.68,10.43 L55.10,10.17 L53.53,9.92 L51.96,9.68 L50.39,9.45 L48.81,9.25 L47.24,9.07 L45.67,8.92 L44.09,8.81 L42.52,8.72 L40.95,8.67 L39.38,8.65 L37.80,8.67 L36.23,8.72 L34.66,8.81 L33.08,8.92 L31.51,9.07 L29.94,9.25 L28.36,9.45 L26.79,9.68 L25.22,9.92 L23.65,10.17 L22.07,10.43 L20.50,10.70Z" fill="#fff"/><rect x="0.8" y="387.97" width="100.7" height="0.6" fill="#3a3a3a"/><path d="M7.39,378.78 L10.61,374.10" stroke="#fff" stroke-width="1.38" stroke-linecap="round"/><text x="9.0" y="386.34" font-size="5.3" fill="#f0f0f0" text-anchor="middle" font-family="Liberation Sans, sans-serif">15</text><path transform="translate(0,371.74)" d="M22.80,5.70 L24.37,5.43 L25.95,5.17 L27.52,4.92 L29.09,4.68 L30.66,4.45 L32.24,4.25 L33.81,4.07 L35.38,3.92 L36.96,3.81 L38.53,3.72 L40.10,3.67 L41.67,3.65 L43.25,3.67 L44.82,3.72 L46.39,3.81 L47.97,3.92 L49.54,4.07 L51.11,4.25 L52.69,4.45 L54.26,4.68 L55.83,4.92 L57.40,5.17 L58.98,5.43 L60.55,5.70 L62.12,5.97 L63.70,6.23 L65.27,6.48 L66.84,6.73 L68.41,6.95 L69.99,7.15 L71.56,7.33 L73.13,7.48 L74.71,7.59 L76.28,7.68 L77.85,7.73 L79.42,7.75 L81.00,7.73 L82.57,7.68 L84.14,7.59 L85.72,7.48 L87.29,7.33 L88.86,7.15 L90.44,6.95 L92.01,6.73 L93.58,6.48 L95.15,6.23 L96.73,5.97 L98.30,5.70 L95.70,11.30 L94.13,11.57 L92.55,11.83 L90.98,12.08 L89.41,12.32 L87.84,12.55 L86.26,12.75 L84.69,12.93 L83.12,13.08 L81.54,13.19 L79.97,13.28 L78.40,13.33 L76.83,13.35 L75.25,13.33 L73.68,13.28 L72.11,13.19 L70.53,13.08 L68.96,12.93 L67.39,12.75 L65.81,12.55 L64.24,12.32 L62.67,12.08 L61.10,11.83 L59.52,11.57 L57.95,11.30 L56.38,11.03 L54.80,10.77 L53.23,10.52 L51.66,10.28 L50.09,10.05 L48.51,9.85 L46.94,9.67 L45.37,9.52 L43.79,9.41 L42.22,9.32 L40.65,9.27 L39.08,9.25 L37.50,9.27 L35.93,9.32 L34.36,9.41 L32.78,9.52 L31.21,9.67 L29.64,9.85 L28.06,10.05 L26.49,10.28 L24.92,10.52 L23.35,10.77 L21.77,11.03 L20.20,11.30Z" fill="#fff"/><rect x="0.8" y="404.60" width="100.7" height="0.6" fill="#3a3a3a"/><path d="M6.89,396.13 L11.11,390.01" stroke="#fff" stroke-width="1.64" stroke-linecap="round"/><text x="9.0" y="402.97" font-size="5.3" fill="#f0f0f0" text-anchor="middle" font-family="Liberation Sans, sans-serif">20</text><path transform="translate(0,388.37)" d="M23.10,4.70 L24.67,4.43 L26.25,4.17 L27.82,3.92 L29.39,3.68 L30.96,3.45 L32.54,3.25 L34.11,3.07 L35.68,2.92 L37.26,2.81 L38.83,2.72 L40.40,2.67 L41.98,2.65 L43.55,2.67 L45.12,2.72 L46.69,2.81 L48.27,2.92 L49.84,3.07 L51.41,3.25 L52.99,3.45 L54.56,3.68 L56.13,3.92 L57.70,4.17 L59.28,4.43 L60.85,4.70 L62.42,4.97 L64.00,5.23 L65.57,5.48 L67.14,5.73 L68.71,5.95 L70.29,6.15 L71.86,6.33 L73.43,6.48 L75.01,6.59 L76.58,6.68 L78.15,6.73 L79.72,6.75 L81.30,6.73 L82.87,6.68 L84.44,6.59 L86.02,6.48 L87.59,6.33 L89.16,6.15 L90.74,5.95 L92.31,5.73 L93.88,5.48 L95.45,5.23 L97.03,4.97 L98.60,4.70 L95.40,12.30 L93.83,12.57 L92.25,12.83 L90.68,13.08 L89.11,13.32 L87.54,13.55 L85.96,13.75 L84.39,13.93 L82.82,14.08 L81.24,14.19 L79.67,14.28 L78.10,14.33 L76.53,14.35 L74.95,14.33 L73.38,14.28 L71.81,14.19 L70.23,14.08 L68.66,13.93 L67.09,13.75 L65.51,13.55 L63.94,13.32 L62.37,13.08 L60.80,12.83 L59.22,12.57 L57.65,12.30 L56.08,12.03 L54.50,11.77 L52.93,11.52 L51.36,11.28 L49.79,11.05 L48.21,10.85 L46.64,10.67 L45.07,10.52 L43.49,10.41 L41.92,10.32 L40.35,10.27 L38.77,10.25 L37.20,10.27 L35.63,10.32 L34.06,10.41 L32.48,10.52 L30.91,10.67 L29.34,10.85 L27.76,11.05 L26.19,11.28 L24.62,11.52 L23.05,11.77 L21.47,12.03 L19.90,12.30Z" fill="#fff"/><rect x="0.8" y="421.23" width="100.7" height="0.6" fill="#3a3a3a"/><circle cx="8.4" cy="407.10" r="0.5" fill="#f0f0f0"/><circle cx="9.4" cy="409.90" r="1.0" fill="#f0f0f0"/><circle cx="8.4" cy="411.30" r="0.6" fill="#f0f0f0"/><circle cx="11.6" cy="407.50" r="0.4" fill="#f0f0f0"/><circle cx="5.8" cy="409.30" r="0.4" fill="#f0f0f0"/><text x="9.0" y="419.60" font-size="5.3" fill="#f0f0f0" text-anchor="middle" font-family="Liberation Sans, sans-serif">30</text><path transform="translate(0,405.00)" d="M21.50,5.90 L23.07,5.68 L24.65,5.47 L26.22,5.27 L27.79,5.07 L29.36,4.90 L30.94,4.73 L32.51,4.59 L34.08,4.47 L35.66,4.38 L37.23,4.31 L38.80,4.26 L40.38,4.25 L41.95,4.26 L43.52,4.31 L45.09,4.38 L46.67,4.47 L48.24,4.59 L49.81,4.73 L51.39,4.90 L52.96,5.07 L54.53,5.27 L56.10,5.47 L57.68,5.68 L59.25,5.90 L60.82,6.12 L62.40,6.33 L63.97,6.53 L65.54,6.72 L67.11,6.90 L68.69,7.07 L70.26,7.21 L71.83,7.33 L73.41,7.42 L74.98,7.49 L76.55,7.54 L78.12,7.55 L79.70,7.54 L81.27,7.49 L82.84,7.42 L84.42,7.33 L85.99,7.21 L87.56,7.07 L89.14,6.90 L90.71,6.73 L92.28,6.53 L93.85,6.33 L95.43,6.12 L97.00,5.90" stroke="#9a9a9a" stroke-width="0.35" fill="none"/><path transform="translate(0,405.00)" d="M21.50,6.80 L23.07,6.58 L24.65,6.37 L26.22,6.17 L27.79,5.97 L29.36,5.80 L30.94,5.63 L32.51,5.49 L34.08,5.37 L35.66,5.28 L37.23,5.21 L38.80,5.16 L40.38,5.15 L41.95,5.16 L43.52,5.21 L45.09,5.28 L46.67,5.37 L48.24,5.49 L49.81,5.63 L51.39,5.80 L52.96,5.97 L54.53,6.17 L56.10,6.37 L57.68,6.58 L59.25,6.80 L60.82,7.02 L62.40,7.23 L63.97,7.43 L65.54,7.62 L67.11,7.80 L68.69,7.97 L70.26,8.11 L71.83,8.23 L73.41,8.32 L74.98,8.39 L76.55,8.44 L78.12,8.45 L79.70,8.44 L81.27,8.39 L82.84,8.32 L84.42,8.23 L85.99,8.11 L87.56,7.97 L89.14,7.80 L90.71,7.63 L92.28,7.43 L93.85,7.23 L95.43,7.02 L97.00,6.80" stroke="#e0e0e0" stroke-width="0.6" fill="none"/><path transform="translate(0,405.00)" d="M21.50,8.00 L23.07,7.78 L24.65,7.57 L26.22,7.37 L27.79,7.17 L29.36,7.00 L30.94,6.83 L32.51,6.69 L34.08,6.57 L35.66,6.48 L37.23,6.41 L38.80,6.36 L40.38,6.35 L41.95,6.36 L43.52,6.41 L45.09,6.48 L46.67,6.57 L48.24,6.69 L49.81,6.83 L51.39,7.00 L52.96,7.17 L54.53,7.37 L56.10,7.57 L57.68,7.78 L59.25,8.00 L60.82,8.22 L62.40,8.43 L63.97,8.63 L65.54,8.82 L67.11,9.00 L68.69,9.17 L70.26,9.31 L71.83,9.43 L73.41,9.52 L74.98,9.59 L76.55,9.64 L78.12,9.65 L79.70,9.64 L81.27,9.59 L82.84,9.52 L84.42,9.43 L85.99,9.31 L87.56,9.17 L89.14,9.00 L90.71,8.83 L92.28,8.63 L93.85,8.43 L95.43,8.22 L97.00,8.00" stroke="#fff" stroke-width="0.7" fill="none"/><path transform="translate(0,405.00)" d="M21.50,9.30 L23.07,9.08 L24.65,8.87 L26.22,8.67 L27.79,8.47 L29.36,8.30 L30.94,8.13 L32.51,7.99 L34.08,7.87 L35.66,7.78 L37.23,7.71 L38.80,7.66 L40.38,7.65 L41.95,7.66 L43.52,7.71 L45.09,7.78 L46.67,7.87 L48.24,7.99 L49.81,8.13 L51.39,8.30 L52.96,8.47 L54.53,8.67 L56.10,8.87 L57.68,9.08 L59.25,9.30 L60.82,9.52 L62.40,9.73 L63.97,9.93 L65.54,10.12 L67.11,10.30 L68.69,10.47 L70.26,10.61 L71.83,10.73 L73.41,10.82 L74.98,10.89 L76.55,10.94 L78.12,10.95 L79.70,10.94 L81.27,10.89 L82.84,10.82 L84.42,10.73 L85.99,10.61 L87.56,10.47 L89.14,10.30 L90.71,10.13 L92.28,9.93 L93.85,9.73 L95.43,9.52 L97.00,9.30" stroke="#fff" stroke-width="2.0" fill="none"/><path transform="translate(0,405.00)" d="M21.50,10.90 L23.07,10.68 L24.65,10.47 L26.22,10.27 L27.79,10.07 L29.36,9.90 L30.94,9.73 L32.51,9.59 L34.08,9.47 L35.66,9.38 L37.23,9.31 L38.80,9.26 L40.38,9.25 L41.95,9.26 L43.52,9.31 L45.09,9.38 L46.67,9.47 L48.24,9.59 L49.81,9.73 L51.39,9.90 L52.96,10.07 L54.53,10.27 L56.10,10.47 L57.68,10.68 L59.25,10.90 L60.82,11.12 L62.40,11.33 L63.97,11.53 L65.54,11.72 L67.11,11.90 L68.69,12.07 L70.26,12.21 L71.83,12.33 L73.41,12.42 L74.98,12.49 L76.55,12.54 L78.12,12.55 L79.70,12.54 L81.27,12.49 L82.84,12.42 L84.42,12.33 L85.99,12.21 L87.56,12.07 L89.14,11.90 L90.71,11.73 L92.28,11.53 L93.85,11.33 L95.43,11.12 L97.00,10.90" stroke="#c8c8c8" stroke-width="0.5" fill="none"/><path transform="translate(0,405.00)" d="M21.50,11.80 L23.07,11.58 L24.65,11.37 L26.22,11.17 L27.79,10.97 L29.36,10.80 L30.94,10.63 L32.51,10.49 L34.08,10.37 L35.66,10.28 L37.23,10.21 L38.80,10.16 L40.38,10.15 L41.95,10.16 L43.52,10.21 L45.09,10.28 L46.67,10.37 L48.24,10.49 L49.81,10.63 L51.39,10.80 L52.96,10.97 L54.53,11.17 L56.10,11.37 L57.68,11.58 L59.25,11.80 L60.82,12.02 L62.40,12.23 L63.97,12.43 L65.54,12.62 L67.11,12.80 L68.69,12.97 L70.26,13.11 L71.83,13.23 L73.41,13.32 L74.98,13.39 L76.55,13.44 L78.12,13.45 L79.70,13.44 L81.27,13.39 L82.84,13.32 L84.42,13.23 L85.99,13.11 L87.56,12.97 L89.14,12.80 L90.71,12.62 L92.28,12.43 L93.85,12.23 L95.43,12.02 L97.00,11.80" stroke="#888" stroke-width="0.3" fill="none"/><rect x="0.8" y="437.86" width="100.7" height="0.6" fill="#3a3a3a"/><circle cx="9.0" cy="426.73" r="0.45" fill="#fff"/><text x="9.0" y="436.23" font-size="5.3" fill="#f0f0f0" text-anchor="middle" font-family="Liberation Sans, sans-serif">2</text><path transform="translate(0,421.63)" d="M23.00,7.69 L23.91,7.57 L24.81,7.36 L25.72,7.09 L26.62,7.09 L27.53,7.28 L28.44,6.71 L29.34,6.55 L30.25,6.96 L31.16,6.66 L32.06,6.27 L32.97,6.35 L33.88,6.24 L34.78,6.14 L35.69,6.28 L36.59,6.32 L37.50,5.90 L38.41,6.26 L39.31,5.79 L40.22,6.18 L41.12,5.95 L42.03,6.09 L42.94,5.76 L43.84,5.72 L44.75,6.01 L45.66,5.96 L46.56,6.42 L47.47,6.31 L48.38,6.14 L49.28,6.27 L50.19,6.13 L51.09,6.34 L52.00,6.94 L52.91,6.61 L53.81,7.04 L54.72,7.08 L55.62,6.83 L56.53,7.46 L57.44,7.02 L58.34,7.35 L59.25,7.87 L60.16,7.98 L61.06,8.04 L61.97,8.17 L62.88,8.00 L63.78,8.24 L64.69,8.25 L65.59,8.51 L66.50,8.29 L67.41,8.89 L68.31,9.06 L69.22,9.01 L70.12,9.03 L71.03,8.97 L71.94,9.08 L72.84,9.12 L73.75,8.96 L74.66,9.42 L75.56,9.22 L76.47,9.45 L77.38,9.27 L78.28,9.22 L79.19,9.02 L80.09,9.12 L81.00,8.97 L81.91,9.19 L82.81,9.30 L83.72,9.18 L84.62,8.63 L85.53,8.74 L86.44,8.74 L87.34,8.99 L88.25,8.80 L89.16,8.33 L90.06,8.33 L90.97,8.51 L91.88,7.82 L92.78,8.19 L93.69,7.88 L94.59,7.59 L95.50,7.41 L95.50,9.66 L94.59,9.80 L93.69,9.77 L92.78,10.10 L91.88,9.66 L90.97,9.98 L90.06,9.82 L89.16,10.44 L88.25,10.59 L87.34,10.43 L86.44,10.89 L85.53,10.79 L84.62,10.63 L83.72,10.92 L82.81,10.96 L81.91,10.79 L81.00,11.05 L80.09,10.90 L79.19,10.78 L78.28,11.36 L77.38,10.77 L76.47,10.72 L75.56,11.08 L74.66,10.88 L73.75,10.72 L72.84,10.83 L71.94,11.09 L71.03,11.13 L70.12,10.81 L69.22,10.82 L68.31,10.90 L67.41,10.58 L66.50,10.51 L65.59,9.95 L64.69,10.42 L63.78,10.02 L62.88,9.77 L61.97,9.90 L61.06,9.63 L60.16,9.78 L59.25,9.58 L58.34,9.01 L57.44,9.39 L56.53,9.25 L55.62,9.00 L54.72,8.90 L53.81,8.89 L52.91,8.43 L52.00,8.59 L51.09,8.24 L50.19,8.36 L49.28,7.84 L48.38,7.76 L47.47,8.32 L46.56,7.95 L45.66,7.55 L44.75,7.75 L43.84,7.94 L42.94,8.07 L42.03,7.48 L41.12,7.54 L40.22,8.09 L39.31,7.99 L38.41,8.05 L37.50,7.77 L36.59,7.91 L35.69,7.94 L34.78,8.20 L33.88,8.00 L32.97,8.37 L32.06,8.48 L31.16,8.03 L30.25,8.36 L29.34,8.73 L28.44,8.56 L27.53,9.09 L26.62,8.69 L25.72,8.73 L24.81,9.30 L23.91,8.98 L23.00,9.62Z" fill="#cfcfcf"/><rect x="0.8" y="454.49" width="100.7" height="0.6" fill="#3a3a3a"/><circle cx="9.0" cy="443.36" r="0.7" fill="#fff"/><text x="9.0" y="452.86" font-size="5.3" fill="#f0f0f0" text-anchor="middle" font-family="Liberation Sans, sans-serif">5</text><path transform="translate(0,438.26)" d="M23.00,7.40 L23.91,7.46 L24.81,6.83 L25.72,7.03 L26.62,6.77 L27.53,6.69 L28.44,6.46 L29.34,6.10 L30.25,6.44 L31.16,6.55 L32.06,5.84 L32.97,5.67 L33.88,5.74 L34.78,5.99 L35.69,6.27 L36.59,5.36 L37.50,5.78 L38.41,5.62 L39.31,5.81 L40.22,5.30 L41.12,5.41 L42.03,5.25 L42.94,5.54 L43.84,6.13 L44.75,5.46 L45.66,5.85 L46.56,6.01 L47.47,6.05 L48.38,6.24 L49.28,6.45 L50.19,6.36 L51.09,6.01 L52.00,6.17 L52.91,6.77 L53.81,6.48 L54.72,6.59 L55.62,7.16 L56.53,7.21 L57.44,7.36 L58.34,7.13 L59.25,7.05 L60.16,7.78 L61.06,7.85 L61.97,7.88 L62.88,8.22 L63.78,8.03 L64.69,8.15 L65.59,8.29 L66.50,7.95 L67.41,8.19 L68.31,8.53 L69.22,8.43 L70.12,8.81 L71.03,8.53 L71.94,8.51 L72.84,9.06 L73.75,8.66 L74.66,8.97 L75.56,9.16 L76.47,8.60 L77.38,8.71 L78.28,8.58 L79.19,8.61 L80.09,8.78 L81.00,9.07 L81.91,8.75 L82.81,8.64 L83.72,8.82 L84.62,8.78 L85.53,8.40 L86.44,8.75 L87.34,8.67 L88.25,8.14 L89.16,7.85 L90.06,7.75 L90.97,8.03 L91.88,7.79 L92.78,7.86 L93.69,7.35 L94.59,7.19 L95.50,7.57 L95.50,9.91 L94.59,9.77 L93.69,9.65 L92.78,10.22 L91.88,9.76 L90.97,9.98 L90.06,10.30 L89.16,10.31 L88.25,10.87 L87.34,10.88 L86.44,11.00 L85.53,11.35 L84.62,11.17 L83.72,11.43 L82.81,11.11 L81.91,11.64 L81.00,11.41 L80.09,11.39 L79.19,11.24 L78.28,11.12 L77.38,11.37 L76.47,11.66 L75.56,11.32 L74.66,11.70 L73.75,10.89 L72.84,11.03 L71.94,11.31 L71.03,10.85 L70.12,11.35 L69.22,11.08 L68.31,10.69 L67.41,10.67 L66.50,11.03 L65.59,10.19 L64.69,10.36 L63.78,10.60 L62.88,9.95 L61.97,10.15 L61.06,9.57 L60.16,10.10 L59.25,9.99 L58.34,9.79 L57.44,9.17 L56.53,9.02 L55.62,8.87 L54.72,8.98 L53.81,9.15 L52.91,9.14 L52.00,9.09 L51.09,8.49 L50.19,8.44 L49.28,8.18 L48.38,8.60 L47.47,8.30 L46.56,7.78 L45.66,7.80 L44.75,7.75 L43.84,8.06 L42.94,7.65 L42.03,8.43 L41.12,8.12 L40.22,7.75 L39.31,7.81 L38.41,8.50 L37.50,8.47 L36.59,8.19 L35.69,7.96 L34.78,8.08 L33.88,8.33 L32.97,8.46 L32.06,8.38 L31.16,8.76 L30.25,8.88 L29.34,8.72 L28.44,8.69 L27.53,8.99 L26.62,9.56 L25.72,9.46 L24.81,9.21 L23.91,9.34 L23.00,9.43Z" fill="#f0f0f0"/><rect x="0.8" y="471.12" width="100.7" height="0.6" fill="#3a3a3a"/><circle cx="9.0" cy="459.99" r="0.7" fill="#fff"/><text x="9.0" y="469.49" font-size="5.3" fill="#f0f0f0" text-anchor="middle" font-family="Liberation Sans, sans-serif">6</text><path transform="translate(0,454.89)" d="M23.00,8.50 L24.50,8.28 L25.99,8.07 L27.49,7.87 L28.98,7.67 L30.48,7.50 L31.98,7.33 L33.47,7.19 L34.97,7.07 L36.46,6.98 L37.96,6.91 L39.45,6.86 L40.95,6.85 L42.45,6.86 L43.94,6.91 L45.44,6.98 L46.93,7.07 L48.43,7.19 L49.92,7.33 L51.42,7.50 L52.92,7.67 L54.41,7.87 L55.91,8.07 L57.40,8.28 L58.90,8.50 L60.40,8.72 L61.89,8.93 L63.39,9.13 L64.88,9.32 L66.38,9.50 L67.88,9.67 L69.37,9.81 L70.87,9.93 L72.36,10.02 L73.86,10.09 L75.35,10.14 L76.85,10.15 L78.35,10.14 L79.84,10.09 L81.34,10.02 L82.83,9.93 L84.33,9.81 L85.82,9.67 L87.32,9.50 L88.82,9.33 L90.31,9.13 L91.81,8.93 L93.30,8.72 L94.80,8.50" stroke="#e6e6e6" stroke-width="1.7" stroke-linecap="round" fill="none"/><rect x="0.8" y="487.75" width="100.7" height="0.6" fill="#3a3a3a"/><circle cx="9.0" cy="476.62" r="0.8" fill="#fff"/><text x="9.0" y="486.12" font-size="5.3" fill="#f0f0f0" text-anchor="middle" font-family="Liberation Sans, sans-serif">8</text><path transform="translate(0,471.52)" d="M23.00,8.50 L24.50,8.28 L25.99,8.07 L27.49,7.87 L28.98,7.67 L30.48,7.50 L31.98,7.33 L33.47,7.19 L34.97,7.07 L36.46,6.98 L37.96,6.91 L39.45,6.86 L40.95,6.85 L42.45,6.86 L43.94,6.91 L45.44,6.98 L46.93,7.07 L48.43,7.19 L49.92,7.33 L51.42,7.50 L52.92,7.67 L54.41,7.87 L55.91,8.07 L57.40,8.28 L58.90,8.50 L60.40,8.72 L61.89,8.93 L63.39,9.13 L64.88,9.32 L66.38,9.50 L67.88,9.67 L69.37,9.81 L70.87,9.93 L72.36,10.02 L73.86,10.09 L75.35,10.14 L76.85,10.15 L78.35,10.14 L79.84,10.09 L81.34,10.02 L82.83,9.93 L84.33,9.81 L85.82,9.67 L87.32,9.50 L88.82,9.33 L90.31,9.13 L91.81,8.93 L93.30,8.72 L94.80,8.50" stroke="#e6e6e6" stroke-width="2.0" stroke-linecap="round" fill="none"/><rect x="0.8" y="504.38" width="100.7" height="0.6" fill="#3a3a3a"/><path d="M6.8,492.45 l1.8,-2.4 l2.6,1.4 l0.2,2.8 l-2.2,1.4 l-1.4,-0.8z" fill="#fff"/><text x="9.0" y="502.75" font-size="5.3" fill="#f0f0f0" text-anchor="middle" font-family="Liberation Sans, sans-serif">30</text><path transform="translate(0,488.15)" d="M21.47,8.25 L22.92,7.13 L24.43,6.44 L25.99,6.08 L27.58,5.89 L29.17,5.71 L30.76,5.54 L32.36,5.40 L33.96,5.28 L35.56,5.18 L37.17,5.11 L38.77,5.06 L40.38,5.05 L41.98,5.06 L43.58,5.11 L45.19,5.18 L46.79,5.28 L48.39,5.40 L49.99,5.54 L51.58,5.71 L53.17,5.89 L54.76,6.08 L56.34,6.29 L57.92,6.50 L59.49,6.72 L61.07,6.93 L62.63,7.14 L64.19,7.35 L65.75,7.54 L67.31,7.71 L68.86,7.88 L70.41,8.02 L71.96,8.13 L73.50,8.23 L75.04,8.33 L76.58,8.44 L78.12,8.54 L79.67,8.60 L81.22,8.65 L82.77,8.67 L84.33,8.67 L85.89,8.65 L87.46,8.61 L89.03,8.56 L90.61,8.50 L92.19,8.43 L93.78,8.38 L95.38,8.36 L96.97,8.25 L97.03,8.75 L95.48,9.08 L93.93,9.47 L92.37,9.83 L90.81,10.15 L89.24,10.45 L87.67,10.73 L86.09,10.97 L84.50,11.19 L82.91,11.38 L81.32,11.54 L79.73,11.67 L78.12,11.76 L76.52,11.83 L74.92,11.86 L73.31,11.82 L71.71,11.72 L70.11,11.60 L68.51,11.46 L66.92,11.29 L65.33,11.11 L63.74,10.92 L62.16,10.71 L60.58,10.50 L59.01,10.28 L57.43,10.07 L55.87,9.86 L54.31,9.65 L52.75,9.46 L51.19,9.29 L49.64,9.12 L48.09,8.98 L46.54,8.87 L45.00,8.77 L43.46,8.71 L41.92,8.66 L40.38,8.65 L38.83,8.66 L37.29,8.71 L35.75,8.77 L34.21,8.87 L32.66,8.98 L31.11,9.12 L29.56,9.29 L28.00,9.46 L26.44,9.65 L24.86,9.70 L23.23,9.44 L21.53,8.75Z" fill="#fff"/><rect x="0.8" y="521.01" width="100.7" height="0.6" fill="#3a3a3a"/><path d="M4.4,506.28 l2.4,7.8 m0,-7.8 l-2.4,7.8 M8.4,506.28 v7.8 M10.6,506.28 v7.8 M12.8,506.28 v7.8" stroke="#fff" stroke-width="1.0" fill="none"/><text x="9.0" y="519.38" font-size="5.3" fill="#f0f0f0" text-anchor="middle" font-family="Liberation Sans, sans-serif">25</text><rect x="20" y="505.18" width="79" height="15.63" fill="#fff" filter="url(#tex)"/><rect x="0.8" y="537.64" width="100.7" height="0.6" fill="#3a3a3a"/><path d="M4.6,522.31 L13.4,527.11 L4.6,531.71Z" fill="#fff"/><text x="9.0" y="536.01" font-size="5.3" fill="#f0f0f0" text-anchor="middle" font-family="Liberation Sans, sans-serif">42</text><polygon points="73.2,530.0 66.8,533.5 66.9,526.2" fill="#fff"/><polygon points="77.7,529.7 84.7,527.5 83.1,533.6" fill="#fff"/><polygon points="71.4,528.5 66.9,522.0 76.1,522.0" fill="#fff"/><polygon points="29.1,530.4 22.4,524.1 31.2,522.0" fill="#fff"/><polygon points="74.4,533.6 76.6,529.0 81.5,533.6" fill="#fff"/><polygon points="53.9,526.3 63.1,528.2 56.8,533.6" fill="#fff"/><polygon points="70.1,525.9 67.9,522.0 72.5,522.0" fill="#fff"/><polygon points="82.3,526.1 75.2,529.5 75.7,522.0" fill="#fff"/><polygon points="24.8,522.0 31.5,526.1 23.4,529.3" fill="#fff"/><polygon points="68.5,526.6 73.9,522.0 75.6,528.8" fill="#fff"/><polygon points="58.9,529.4 51.1,522.5 60.9,522.0" fill="#fff"/><polygon points="93.4,533.2 95.9,530.7 96.8,533.6" fill="#fff"/><polygon points="83.0,533.6 80.3,530.7 87.2,531.4" fill="#fff"/><polygon points="35.2,531.4 40.3,531.3 37.8,533.6" fill="#fff"/><polygon points="36.9,532.8 26.5,529.5 34.5,522.2" fill="#fff"/><polygon points="81.8,522.3 89.4,529.3 79.5,532.4" fill="#fff"/><polygon points="43.5,532.9 36.7,533.6 37.8,528.4" fill="#fff"/><polygon points="21.0,531.6 20.0,524.8 26.2,527.0" fill="#fff"/><polygon points="34.4,523.3 34.2,529.2 29.1,526.1" fill="#fff"/><polygon points="26.3,533.6 20.0,532.4 23.4,525.0" fill="#fff"/><polygon points="90.0,533.6 87.1,526.0 97.3,528.6" fill="#fff"/><polygon points="44.4,523.3 55.6,523.7 49.7,533.2" fill="#fff"/><polygon points="52.1,528.1 46.7,529.3 48.3,524.0" fill="#fff"/><polygon points="32.6,530.3 29.3,533.6 27.0,529.7" fill="#fff"/><polygon points="42.3,529.3 36.4,524.7 43.3,522.0" fill="#fff"/><polygon points="52.3,527.4 53.7,533.6 44.1,533.6" fill="#fff"/><polygon points="63.4,530.6 73.9,528.2 70.7,533.6" fill="#fff"/><polygon points="70.9,524.6 77.1,522.0 79.9,526.5" fill="#fff"/><polygon points="81.6,530.5 76.0,531.7 77.7,526.3" fill="#fff"/><polygon points="89.2,527.2 89.7,522.0 95.6,524.0" fill="#fff"/></svg></div>
<div class="a" style="left:0px;top:534px;width:110px;height:11px;background:#535353;border-top:0.6px solid #3a3a3a"></div>
<svg style="left:41px;top:537px" width="9" height="7" viewBox="0 0 9 7"><circle cx="2.8" cy="3.4" r="2" fill="none" stroke="#8a8a8a" stroke-width="0.7"/><path d="M4.6,4.4 L8,1" stroke="#8a8a8a" stroke-width="0.8"/></svg>
<svg style="left:56.5px;top:537.2px" width="8" height="7" viewBox="0 0 8 7"><rect x="0.5" y="0.8" width="6.6" height="5" fill="none" stroke="#d6d6d6" stroke-width="0.8"/><path d="M2,2.3 V4.5 M3.8,2 V5 M5.5,2.3 V4.5" stroke="#d6d6d6" stroke-width="0.6"/></svg>
<svg style="left:72.5px;top:537px" width="7" height="7" viewBox="0 0 7 7"><path d="M0.8,0.8 H6.2 V6.2 H0.8Z" fill="#cfcfcf"/><path d="M0.8,3.5 H3.4 V6.2 H0.8Z" fill="#535353"/><path d="M1.3,4.1 H3 V5.8 H1.3Z" fill="#cfcfcf"/></svg>
<svg style="left:88.5px;top:536.8px" width="6" height="8" viewBox="0 0 6 8"><path d="M0.4,1.8 H5.6 M2,1.6 V0.8 H4 V1.6 M1,2.4 L1.3,7.2 H4.7 L5,2.4Z" fill="#767676" stroke="#767676" stroke-width="0.6"/></svg>
<div class="a" style="left:110px;top:32.3px;width:731px;height:11px;background:#3a3a3a;background:linear-gradient(#343434,#3d3d3d)"></div>
<div class="a" style="left:110px;top:32.3px;width:1.6px;height:513px;background:#2a2a2a;"></div>
<div class="a" style="left:112px;top:32.5px;width:166px;height:10.8px;background:#4d4d4d;border-right:0.5px solid #2c2c2c"></div>
<div class="t" style="left:116.7px;top:34.5px;font-size:5.6px;letter-spacing:0.029px;color:#e6e6e6;font-weight:bold;">ToiletPaperRoll_TextureMap.psd @ 22.7% (side, RGB/8)</div>
<svg style="left:270.5px;top:35.8px" width="4" height="4" viewBox="0 0 4 4"><path d="M0.3,0.3 L3.7,3.7 M3.7,0.3 L0.3,3.7" stroke="#ddd" stroke-width="0.8"/></svg>
<div class="a" style="left:111.6px;top:43.3px;width:719px;height:494px;background:#272727;"></div>
<div class="a" style="left:830.6px;top:43.3px;width:8.6px;height:494px;background:#414141;background:linear-gradient(90deg,#383838,#464646 55%,#434343)"></div>
<div class="a" style="left:839.2px;top:32.3px;width:2px;height:513px;background:#282828;"></div>
<div class="a" style="left:111.6px;top:536.8px;width:727.6px;height:8.2px;background:#3a3a3a;background:linear-gradient(#383838,#444)"></div>
<div class="a" style="left:830.6px;top:536.8px;width:8.6px;height:8.2px;background:#4a4a4a;"></div>
<div class="a" style="left:111.6px;top:537px;width:132.5px;height:8px;background:#4a4a4a;"></div>
<div class="t" style="left:117px;top:538px;font-size:5.5px;letter-spacing:-0.199px;color:#e4e4e4;">22.7%</div>
<div class="a" style="left:136.5px;top:537px;width:0.5px;height:8px;background:#333;"></div>
<svg style="left:139.5px;top:537.8px" width="7" height="7" viewBox="0 0 7 7"><circle cx="3.5" cy="3.5" r="2.8" fill="#d8d8d8"/><path d="M3.5,1.5 V3.7 H5" stroke="#444" stroke-width="0.8" fill="none"/></svg>
<div class="t" style="left:173px;top:538px;font-size:5.5px;letter-spacing:-0.221px;color:#e4e4e4;">Doc: 12.0M/71.2M</div>
<div class="a" style="left:238px;top:537px;width:0.5px;height:8px;background:#333;"></div>
<svg style="left:240px;top:538.5px" width="4" height="6"><path d="M0.3,0.3 L3.6,2.8 L0.3,5.3Z" fill="#eee"/></svg>
<div class="a" style="left:350px;top:169px;width:242px;height:242px;background:#1d1b1c;box-shadow:0 0 2px rgba(0,0,0,.45)"></div>
<svg width="0" height="0" style="left:0;top:0"><defs><filter id="pn" x="0" y="0" width="100%" height="100%"><feTurbulence type="fractalNoise" baseFrequency="0.9 0.25" numOctaves="2" seed="4"/><feColorMatrix type="matrix" values="0 0 0 0 0.5  0 0 0 0 0.5  0 0 0 0 0.55  0.9 0 0 0 -0.33"/></filter><filter id="pn2" x="0" y="0" width="100%" height="100%"><feTurbulence type="fractalNoise" baseFrequency="0.25 0.9" numOctaves="2" seed="9"/><feColorMatrix type="matrix" values="0 0 0 0 0.5  0 0 0 0 0.5  0 0 0 0 0.55  0.9 0 0 0 -0.33"/></filter><filter id="cn" x="0" y="0" width="100%" height="100%"><feTurbulence type="fractalNoise" baseFrequency="0.06 0.02" numOctaves="2" seed="2"/><feColorMatrix type="matrix" values="0 0 0 0 1  0 0 0 0 0.85  0 0 0 0 0.6  0.8 0 0 0 -0.3"/></filter></defs></svg>
<div class="a" style="left:351.5px;top:173.6px;width:239.6px;height:60px;background:linear-gradient(90deg,#c4c7d4,#c7cad7 30%,#c5c8d5 60%,#c8cbd8 85%,#c5c8d5)"></div>
<div class="a" style="left:351.5px;top:173.6px;width:239.6px;height:60px;overflow:hidden"><svg style="left:-3px;top:-3px" width="250" height="70"><rect width="250" height="70" filter="url(#pn)"/></svg></div>
<div class="a" style="left:351.5px;top:237.4px;width:240.5px;height:66.5px;background:linear-gradient(90deg,#c29d5e 0%,#c49f60 21%,#bf995a 21.5%,#c39e5f 38%,#c6a163 52%,#c39e60 64%,#c7a366 80%,#c39e5f 100%)"></div>
<div class="a" style="left:351.5px;top:237.4px;width:240.5px;height:66.5px;overflow:hidden"><svg style="left:-3px;top:-3px" width="250" height="74"><rect width="250" height="74" filter="url(#cn)" opacity=".16"/></svg></div>
<svg style="left:0;top:0" width="1000" height="545"><defs><radialGradient id="rg" gradientUnits="userSpaceOnUse" cx="405.2" cy="357.4" r="51.6"><stop offset="0.48" stop-color="#c2c5d3"/><stop offset="0.6" stop-color="#c9ccda"/><stop offset="0.85" stop-color="#c8cbd9"/><stop offset="1" stop-color="#c1c4d2"/></radialGradient></defs><polygon points="456.80,357.40 452.87,377.15 441.69,393.89 424.95,405.07 405.20,409.00 385.45,405.07 368.71,393.89 357.53,377.15 353.60,357.40 357.53,337.65 368.71,320.91 385.45,309.73 405.20,305.80 424.95,309.73 441.69,320.91 452.87,337.65" fill="url(#rg)"/><polygon points="430.50,357.40 428.57,367.08 423.09,375.29 414.88,380.77 405.20,382.70 395.52,380.77 387.31,375.29 381.83,367.08 379.90,357.40 381.83,347.72 387.31,339.51 395.52,334.03 405.20,332.10 414.88,334.03 423.09,339.51 428.57,347.72" fill="#1d1b1c"/></svg>
<div class="a" style="left:473px;top:305.4px;width:104.7px;height:104.9px;background:linear-gradient(180deg,#c6c9d6,#c8cbd8 40%,#c5c8d5 62%,#c8cbd8)"></div>
<div class="a" style="left:473px;top:305.4px;width:104.7px;height:104.9px;overflow:hidden"><svg style="left:-3px;top:-3px" width="112" height="112"><rect width="112" height="112" filter="url(#pn2)"/></svg></div>
<div class="a" style="left:477px;top:369.4px;width:68px;height:0.9px;background:rgba(140,140,150,.4)"></div>
<div class="a" style="left:841.2px;top:32.3px;width:158.8px;height:6.2px;background:#333;background:linear-gradient(#3c3c3c,#2c2c2c)"></div>
<svg style="left:853.6px;top:34px" width="5" height="3.4" viewBox="0 0 5 3.4"><path d="M2.2,0 L0.2,1.7 L2.2,3.4Z M4.6,0 L2.6,1.7 L4.6,3.4Z" fill="#e0e0e0"/></svg>
<svg style="left:992.6px;top:34px" width="5" height="3.4" viewBox="0 0 5 3.4"><path d="M0.4,0 L2.4,1.7 L0.4,3.4Z M2.8,0 L4.8,1.7 L2.8,3.4Z" fill="#e0e0e0"/></svg>
<div class="a" style="left:841.2px;top:38.5px;width:19px;height:506.5px;background:#535353;"></div>
<div class="a" style="left:860.2px;top:38.5px;width:2px;height:506.5px;background:#2c2c2c;"></div>
<div class="a" style="left:845.5px;top:41.2px;width:10.5px;height:1.2px;background:#3a3a3a;"></div>
<div class="a" style="left:843.5px;top:129px;width:14.5px;height:0.6px;background:#3e3e3e;"></div>
<div class="a" style="left:843.5px;top:129.6px;width:14.5px;height:0.4px;background:#626262;"></div>
<div class="a" style="left:843.5px;top:238px;width:14.5px;height:0.6px;background:#3e3e3e;"></div>
<div class="a" style="left:843.5px;top:238.6px;width:14.5px;height:0.4px;background:#626262;"></div>
<div class="a" style="left:843.5px;top:293.3px;width:14.5px;height:0.6px;background:#3e3e3e;"></div>
<div class="a" style="left:843.5px;top:293.90000000000003px;width:14.5px;height:0.4px;background:#626262;"></div>
<div class="a" style="left:842.6px;top:143.2px;width:16.2px;height:12.4px;background:#383838;border-radius:1.5px;box-shadow:0 0 0 0.5px #2c2c2c"></div>
<svg style="left:843.1px;top:46.5px" width="14" height="13" viewBox="0 0 14 13"><path d="M3,2.2 L3,9 L4.8,7.4 L8.2,7.2Z" fill="#cacaca"/><path d="M9.6,6.2 V10.6 M7.4,8.4 H11.8" stroke="#cacaca" stroke-width="0.8"/></svg>
<svg style="left:843.1px;top:60.5px" width="14" height="13" viewBox="0 0 14 13"><rect x="3" y="2.6" width="7" height="7" fill="none" stroke="#cacaca" stroke-width="0.8" stroke-dasharray="1.6 1"/><path d="M11.6,12.2 L13,12.2 L13,10.8Z" fill="#cacaca"/></svg>
<svg style="left:843.1px;top:74.1px" width="14" height="13" viewBox="0 0 14 13"><path d="M3,3 L6.6,5.4 L10.4,2.6 L9.4,8 L5.4,9.2 L4.6,10.8 M5.4,9.2 L3,3" fill="none" stroke="#cacaca" stroke-width="0.85" stroke-linejoin="round"/><path d="M11.6,12.2 L13,12.2 L13,10.8Z" fill="#cacaca"/></svg>
<svg style="left:843.1px;top:87.3px" width="14" height="13" viewBox="0 0 14 13"><path d="M5.8,5.6 L11.2,10.6" stroke="#cacaca" stroke-width="1.2" stroke-linecap="round"/><path d="M4.6,1.6 L5.2,3.6 L7.2,3 L5.8,4.6 L7.2,6.2 L5.2,5.6 L4.6,7.6 L4,5.6 L2,6.2 L3.4,4.6 L2,3 L4,3.6Z" fill="#cacaca"/></svg>
<svg style="left:843.1px;top:100.8px" width="14" height="13" viewBox="0 0 14 13"><path d="M4.6,1.8 V8.6 H11.4 M2.4,4 H9.2 V10.8" fill="none" stroke="#cacaca" stroke-width="1.1"/><path d="M11.6,12.2 L13,12.2 L13,10.8Z" fill="#cacaca"/></svg>
<svg style="left:843.1px;top:114.3px" width="14" height="13" viewBox="0 0 14 13"><path d="M3,10.8 L3.4,9 L7.6,4.8 L9,6.2 L4.8,10.4Z" fill="none" stroke="#cacaca" stroke-width="0.75"/><path d="M7,4 L9.8,6.8 M8,4.6 L10.2,2.2 C11,1.4 12.2,2.6 11.4,3.4 L9.2,5.8Z" fill="#cacaca" stroke="#cacaca" stroke-width="0.8"/><path d="M11.6,12.2 L13,12.2 L13,10.8Z" fill="#cacaca"/></svg>
<svg style="left:843.1px;top:129.5px" width="14" height="13" viewBox="0 0 14 13"><g transform="rotate(-38 7 6.5)"><rect x="1.6" y="4.3" width="10.8" height="4.4" rx="2.2" fill="none" stroke="#cacaca" stroke-width="0.85"/><rect x="5" y="4.3" width="4" height="4.4" fill="#cacaca" opacity=".75"/></g><path d="M11.6,12.2 L13,12.2 L13,10.8Z" fill="#cacaca"/></svg>
<svg style="left:843.1px;top:142.8px" width="14" height="13" viewBox="0 0 14 13"><path d="M11.6,1.4 L6.6,7" stroke="#f0f0f0" stroke-width="1.3" stroke-linecap="round"/><path d="M1.8,11 C4.6,11.2 7,9.8 8,7.6 L6.2,5.8 C5.4,7.4 4.6,9 1.8,11Z" fill="#f0f0f0"/><path d="M11.6,12.2 L13,12.2 L13,10.8Z" fill="#cacaca"/></svg>
<svg style="left:843.1px;top:157.2px" width="14" height="13" viewBox="0 0 14 13"><path d="M5.6,2.2 H8.4 L8,6 H11 V8.4 H3 V6 H6Z" fill="#cacaca"/><path d="M2.8,9.8 H11.2" stroke="#cacaca" stroke-width="0.9"/><path d="M11.6,12.2 L13,12.2 L13,10.8Z" fill="#cacaca"/></svg>
<svg style="left:843.1px;top:169.9px" width="14" height="13" viewBox="0 0 14 13"><path d="M11,2 L6.4,7" stroke="#cacaca" stroke-width="1.2" stroke-linecap="round"/><path d="M3,10 C4.4,10.2 5.8,9.4 6.4,8.2 L5.2,7 C4.6,8.2 4,9.2 3,10Z" fill="#cacaca"/><path d="M3,3.2 H8.4 M3,3.2 L4.4,2 M3,3.2 L4.4,4.4" stroke="#cacaca" stroke-width="0.8" fill="none"/><path d="M11.6,12.2 L13,12.2 L13,10.8Z" fill="#cacaca"/></svg>
<svg style="left:843.1px;top:183.6px" width="14" height="13" viewBox="0 0 14 13"><path d="M2.6,8.2 L8,3 L11.4,5 L6,10.2 L3.6,10.2Z" fill="#cacaca" opacity=".9"/><path d="M4.6,6.4 L7.6,8.6" stroke="#535353" stroke-width="0.7"/><path d="M11.6,12.2 L13,12.2 L13,10.8Z" fill="#cacaca"/></svg>
<svg style="left:843.1px;top:196.8px" width="14" height="13" viewBox="0 0 14 13"><path d="M4.2,5.2 L8,2.6 L11.4,7 L7.2,10 Z" fill="#cacaca"/><path d="M3.4,5.4 C2.2,6.6 2.2,8.4 3,9.2 C3.8,8.4 4,6.8 3.4,5.4Z" fill="#cacaca"/><path d="M6.6,1.2 C5.4,1.6 5.4,3.4 6.4,4.4" stroke="#cacaca" stroke-width="0.7" fill="none"/><path d="M11.6,12.2 L13,12.2 L13,10.8Z" fill="#cacaca"/></svg>
<svg style="left:843.1px;top:210.4px" width="14" height="13" viewBox="0 0 14 13"><path d="M7,2 C8.4,4.4 10,6 10,8 C10,9.8 8.6,11 7,11 C5.4,11 4,9.8 4,8 C4,6 5.6,4.4 7,2Z" fill="#cacaca"/><path d="M11.6,12.2 L13,12.2 L13,10.8Z" fill="#cacaca"/></svg>
<svg style="left:843.1px;top:224.1px" width="14" height="13" viewBox="0 0 14 13"><circle cx="5.6" cy="5" r="2.8" fill="#cacaca"/><path d="M7.4,7 L11,10.8" stroke="#cacaca" stroke-width="1.3" stroke-linecap="round"/><path d="M11.6,12.2 L13,12.2 L13,10.8Z" fill="#cacaca"/></svg>
<svg style="left:843.1px;top:238.9px" width="14" height="13" viewBox="0 0 14 13"><path d="M10.6,1.8 L12,3.2 L10.2,5 L8.6,3.4Z" fill="#cacaca"/><path d="M8.4,3.8 L10,5.4 L7.4,9.6 L3,10.8 L4.2,6.4Z" fill="none" stroke="#cacaca" stroke-width="0.85"/><path d="M3.2,10.6 L6.4,7.4" stroke="#cacaca" stroke-width="0.7"/><circle cx="6.6" cy="7.2" r="0.8" fill="#cacaca"/><path d="M11.6,12.2 L13,12.2 L13,10.8Z" fill="#cacaca"/></svg>
<svg style="left:843.1px;top:252.1px" width="14" height="13" viewBox="0 0 14 13"><text x="7" y="11" font-family="Liberation Serif, serif" font-size="11.5" text-anchor="middle" fill="#cacaca">T</text><path d="M11.6,12.2 L13,12.2 L13,10.8Z" fill="#cacaca"/></svg>
<svg style="left:843.1px;top:265.8px" width="14" height="13" viewBox="0 0 14 13"><path d="M4,1.8 L4,10.2 L6,8.4 L7.4,11.4 L8.8,10.8 L7.4,7.8 L10,7.6Z" fill="#2e2e2e" stroke="#9a9a9a" stroke-width="0.6"/><path d="M11.6,12.2 L13,12.2 L13,10.8Z" fill="#cacaca"/></svg>
<svg style="left:843.1px;top:279.4px" width="14" height="13" viewBox="0 0 14 13"><path d="M3,5 C3,3 5.4,3 5.6,4.4 C5.6,2 8.6,1.6 8.6,4 C10.4,2.8 12,5 10.4,6.4 C12,7 11.4,9.6 9.4,9.2 C9.6,11 7,11.4 6.4,9.8 C5.4,11.2 3,10.4 3.8,8.6 C2,8.6 1.6,6 3,5Z" fill="#a8a8a8"/><path d="M11.6,12.2 L13,12.2 L13,10.8Z" fill="#cacaca"/></svg>
<svg style="left:843.1px;top:295.0px" width="14" height="13" viewBox="0 0 14 13"><path d="M4.4,9.6 C3.4,8 3,6.6 3.6,5.8 L5,6.6 L4.8,3.2 C5,2.4 5.9,2.6 6,3.2 L6.4,2.4 C6.8,1.8 7.6,2 7.6,2.8 L8.2,2.6 C8.8,2.2 9.4,2.6 9.4,3.2 L10,3.4 C10.6,3.2 11,3.8 10.8,4.4 L10.2,8 C10,9.4 9.2,10.4 7.6,10.6 C6.2,10.8 5.2,10.6 4.4,9.6Z" fill="#cacaca"/><path d="M2.4,3.4 C3.6,1.4 6,0.6 8,1.2" stroke="#cacaca" stroke-width="0.6" fill="none"/><path d="M11.6,12.2 L13,12.2 L13,10.8Z" fill="#cacaca"/></svg>
<svg style="left:843.1px;top:308.3px" width="14" height="13" viewBox="0 0 14 13"><circle cx="5.8" cy="5.2" r="3" fill="none" stroke="#cacaca" stroke-width="1"/><path d="M8,7.6 L11.2,11" stroke="#cacaca" stroke-width="1.4" stroke-linecap="round"/></svg>
<svg style="left:842.6px;top:322.4px" width="6" height="6" viewBox="0 0 6 6"><rect x="2" y="2" width="3.4" height="3.4" fill="#f0f0f0" stroke="#222" stroke-width="0.4"/><rect x="0.4" y="0.4" width="3.4" height="3.4" fill="#111" stroke="#ddd" stroke-width="0.4"/></svg>
<svg style="left:852px;top:322.4px" width="6" height="6" viewBox="0 0 6 6"><path d="M1,1.4 H4.4 V4.8" fill="none" stroke="#e0e0e0" stroke-width="0.7"/><path d="M0.2,1.4 L1.6,0.2 V2.6Z M4.4,5.8 L3.2,4.4 H5.6Z" fill="#e0e0e0"/></svg>
<div class="a" style="left:848.2px;top:336.7px;width:9.6px;height:9.2px;background:#5aa7c6;border:0.7px solid #cfe4ee"></div>
<div class="a" style="left:843.2px;top:331.3px;width:9.2px;height:9.1px;background:#b5b9cb;border:0.7px solid #dedfe6"></div>
<svg style="left:845.2px;top:350.6px" width="10" height="7.4" viewBox="0 0 10 7.4"><rect x="0.4" y="0.4" width="9.2" height="6.6" fill="none" stroke="#dadada" stroke-width="0.8"/><circle cx="5" cy="3.7" r="2" fill="none" stroke="#dadada" stroke-width="0.7" stroke-dasharray="1 0.6"/></svg>
<svg style="left:844.8px;top:364.6px" width="13" height="9" viewBox="0 0 13 9"><rect x="2.6" y="0.4" width="6.6" height="4.6" fill="#535353" stroke="#dadada" stroke-width="0.8"/><rect x="0.4" y="2.4" width="6.6" height="4.6" fill="#535353" stroke="#dadada" stroke-width="0.8"/><path d="M10.6,8.4 L12,8.4 L12,7Z" fill="#dcdcdc"/></svg>
<div class="a" style="left:997.5px;top:38.5px;width:2.5px;height:506.5px;background:#23212b;"></div>
<div class="a" style="left:862.2px;top:38.5px;width:135.3px;height:9.7px;background:#424242;"></div>
<div class="a" style="left:862.2px;top:39px;width:32.8px;height:9.2px;background:#535353;border-radius:1px 1px 0 0;border-top:0.5px solid #6a6a6a;border-right:0.5px solid #383838"></div>
<div class="t" style="left:865.1px;top:41px;font-size:5.4px;letter-spacing:-0.250px;color:#e2e8f2;font-weight:bold;">Coolorus 2</div>
<svg style="left:988.3px;top:42.6px" width="3" height="2"><path d="M0,0 L2.6,0 L1.3,1.6Z" fill="#ddd"/></svg>
<div class="a" style="left:992px;top:41.2px;width:4px;height:4.6px;background:#6a6a6a;"></div>
<div class="a" style="left:862.2px;top:48.2px;width:135.3px;height:143.4px;background:#535353;"></div>
<svg style="left:0;top:0" width="1000" height="260" viewBox="0 0 1000 260"><circle cx="929.9" cy="125.1" r="60.6" fill="#3a3a3a"/><circle cx="919.4" cy="58.3" r="6.2" fill="#3a3a3a"/><path d="M919.4,58.3 L920.8,67.2" stroke="#3a3a3a" stroke-width="7"/><circle cx="934.9" cy="57.3" r="6.2" fill="#3a3a3a"/><path d="M934.9,57.3 L934.2,66.3" stroke="#3a3a3a" stroke-width="7"/><circle cx="949.8" cy="60.2" r="6.2" fill="#3a3a3a"/><path d="M949.8,60.2 L947.2,68.8" stroke="#3a3a3a" stroke-width="7"/><circle cx="963.8" cy="66.4" r="6.2" fill="#3a3a3a"/><path d="M963.8,66.4 L959.3,74.2" stroke="#3a3a3a" stroke-width="7"/><circle cx="976.4" cy="75.3" r="6.2" fill="#3a3a3a"/><path d="M976.4,75.3 L970.3,81.9" stroke="#3a3a3a" stroke-width="7"/><circle cx="986.5" cy="86.9" r="6.2" fill="#3a3a3a"/><path d="M986.5,86.9 L979.0,91.9" stroke="#3a3a3a" stroke-width="7"/><circle cx="882.3" cy="68.3" r="15.2" fill="#3a3a3a"/><circle cx="898.5" cy="64.3" r="6.6" fill="#3a3a3a"/><circle cx="873.2" cy="162.2" r="5.9" fill="#3a3a3a"/><circle cx="881.8" cy="173.2" r="6.2" fill="#3a3a3a"/><circle cx="892.8" cy="181.6" r="6.2" fill="#3a3a3a"/><circle cx="881.4" cy="164.5" r="2.6" fill="#3a3a3a"/><circle cx="890.5" cy="173.2" r="2.6" fill="#3a3a3a"/><circle cx="872.5" cy="87" r="3.2" fill="#3a3a3a"/><circle cx="929.9" cy="125.1" r="59.0" fill="#2b2b2b"/></svg>
<div class="a" style="left:870.90px;top:66.10px;width:118.0px;height:118.0px;border-radius:50%;background:conic-gradient(from 299.8deg,#ff0000,#ffff00,#00ff00,#00ffff,#0000ff,#ff00ff,#ff0000);-webkit-mask:radial-gradient(circle closest-side,transparent 49.0px,#000 49.8px);mask:radial-gradient(circle closest-side,transparent 49.0px,#000 49.8px)"></div>
<svg style="left:0;top:0" width="1000" height="260" viewBox="0 0 1000 260"><defs><linearGradient id="svw" x1="0" y1="0" x2="1" y2="0"><stop offset="0" stop-color="#fff"/><stop offset="1" stop-color="#0040ff"/></linearGradient><linearGradient id="svb" x1="0" y1="0" x2="0" y2="1"><stop offset="0" stop-color="#000" stop-opacity="0"/><stop offset="1" stop-color="#000"/></linearGradient></defs><circle cx="929.9" cy="125.1" r="37.6" fill="none" stroke="#3c3c3c" stroke-width="0.6"/><path d="M915.8,73.1 L919.9,88.8 M943.7,177.1 L939.3,161.4" stroke="#555" stroke-width="0.6"/><circle cx="919.9" cy="88.8" r="1.3" fill="#777"/><circle cx="939.3" cy="161.4" r="1.3" fill="#bbb"/><rect x="894.9" y="90.5" width="69.8" height="69.2" fill="url(#svw)"/><rect x="894.9" y="90.5" width="69.8" height="69.2" fill="url(#svb)"/><circle cx="899.2" cy="107.8" r="3.1" fill="#b3b7cb" stroke="#666" stroke-width="0.7"/><circle cx="915.8" cy="73.1" r="3.6" fill="#ffb000" stroke="#fff" stroke-width="1"/><circle cx="915.8" cy="73.1" r="4.4" fill="none" stroke="#444" stroke-width="0.5"/><circle cx="943.7" cy="177.1" r="3.6" fill="#0040ff" stroke="#fff" stroke-width="1"/><circle cx="943.7" cy="177.1" r="4.4" fill="none" stroke="#333" stroke-width="0.5"/><circle cx="898.5" cy="64.3" r="5.5" fill="#3c9fc0"/><circle cx="882.3" cy="68.3" r="13.7" fill="#b3b7cb"/><path d="M905,53.6 H907.4 V56 M908.6,57.4 H906.2 V55" fill="none" stroke="#d8d8d8" stroke-width="0.7"/><path d="M904.2,53.6 L905.4,52.6 V54.6Z M909.4,57.4 L908.2,56.4 V58.4Z" fill="#d8d8d8"/><circle cx="919.4" cy="58.3" r="4.8" fill="#8c8c8c"/><path d="M919.4,53.699999999999996 A4.6,4.6 0 0 0 919.4,62.9Z" fill="#7a7a7a"/><path d="M918.1999999999999,54.099999999999994 L919.4,61.3 L920.6,54.099999999999994" fill="#a8a8a8" opacity=".55"/><circle cx="934.9" cy="57.3" r="4.8" fill="#8c8c8c"/><path d="M934.9,52.699999999999996 A4.6,4.6 0 0 0 934.9,61.9Z" fill="#7a7a7a"/><path d="M933.6999999999999,53.099999999999994 L934.9,60.3 L936.1,53.099999999999994" fill="#a8a8a8" opacity=".55"/><circle cx="949.8" cy="60.2" r="4.8" fill="#8c8c8c"/><path d="M949.8,55.6 A4.6,4.6 0 0 0 949.8,64.8Z" fill="#7a7a7a"/><path d="M948.5999999999999,56.0 L949.8,63.2 L951.0,56.0" fill="#a8a8a8" opacity=".55"/><circle cx="963.8" cy="66.4" r="4.8" fill="#8c8c8c"/><path d="M963.8,61.800000000000004 A4.6,4.6 0 0 0 963.8,71.0Z" fill="#7a7a7a"/><path d="M962.5999999999999,62.2 L963.8,69.4 L965.0,62.2" fill="#a8a8a8" opacity=".55"/><circle cx="976.4" cy="75.3" r="4.8" fill="#8c8c8c"/><path d="M976.4,70.7 A4.6,4.6 0 0 0 976.4,79.89999999999999Z" fill="#7a7a7a"/><path d="M975.1999999999999,71.1 L976.4,78.3 L977.6,71.1" fill="#a8a8a8" opacity=".55"/><circle cx="986.5" cy="86.9" r="4.8" fill="#8c8c8c"/><path d="M986.5,82.30000000000001 A4.6,4.6 0 0 0 986.5,91.5Z" fill="#7a7a7a"/><path d="M985.3,82.7 L986.5,89.9 L987.7,82.7" fill="#a8a8a8" opacity=".55"/><rect x="870.8" y="85.2" width="3" height="3" fill="#8a8a8a"/><rect x="872" y="86.4" width="3" height="3" fill="#6c6c6c" stroke="#8a8a8a" stroke-width="0.4"/><circle cx="873.2" cy="162.2" r="4.5" fill="#222"/><path d="M870.43,160.60 A3.2,3.2 0 0 1 875.97,160.60" stroke="#ffd800" stroke-width="1.7" fill="none"/><path d="M875.97,160.60 A3.2,3.2 0 0 1 873.20,165.40" stroke="#e82020" stroke-width="1.7" fill="none"/><path d="M873.20,165.40 A3.2,3.2 0 0 1 870.43,160.60" stroke="#1060ff" stroke-width="1.7" fill="none"/><circle cx="881.8" cy="173.2" r="5" fill="#8a8a8a"/><circle cx="881.8" cy="173.2" r="3.4" fill="#777" stroke="#9c9c9c" stroke-width="0.5"/><path d="M883.2,171 L880,173.2 L883.2,175.4Z" fill="#a4a4a4"/><circle cx="892.8" cy="181.6" r="5" fill="#8a8a8a"/><path d="M891.4,179.2 L895,181.6 L891.4,184Z" fill="#aaa"/><circle cx="881.4" cy="164.5" r="1.7" fill="#5a5a5a"/><circle cx="890.5" cy="173.2" r="1.7" fill="#5a5a5a"/><rect x="987.6" y="52.699999999999996" width="2.2" height="11.2" fill="#28a8e0" transform="rotate(0 988.7 58.3)"/><rect x="987.6" y="52.699999999999996" width="2.2" height="11.2" fill="#28a8e0" transform="rotate(45 988.7 58.3)"/><rect x="987.6" y="52.699999999999996" width="2.2" height="11.2" fill="#28a8e0" transform="rotate(90 988.7 58.3)"/><rect x="987.6" y="52.699999999999996" width="2.2" height="11.2" fill="#28a8e0" transform="rotate(135 988.7 58.3)"/><circle cx="988.7" cy="58.3" r="3.9" fill="#28a8e0"/><circle cx="988.7" cy="58.3" r="2" fill="#535353"/></svg>
<div class="a" style="left:970.2px;top:178.8px;width:23.8px;height:8.6px;background:#2c2c2c;box-shadow:0 0 0 0.5px #242424"></div>
<div class="t" style="left:973.2px;top:180.6px;font-size:5.1px;letter-spacing:-0.201px;color:#f2f2f2;font-weight:bold;">B3B7CB</div>
<svg style="left:964.6px;top:181px" width="3" height="4" viewBox="0 0 3 4"><rect x="0.3" y="1.6" width="2.4" height="2" fill="#9a9a9a"/><path d="M0.8,1.6 V1 C0.8,0.2 2.2,0.2 2.2,1 V1.6" stroke="#9a9a9a" stroke-width="0.4" fill="none"/></svg>
<div class="a" style="left:862.2px;top:191.6px;width:135.3px;height:9px;background:#3d3d3d;"></div>
<div class="a" style="left:862.2px;top:191.6px;width:42.8px;height:9.2px;background:#535353;border-top:0.5px solid #676767"></div>
<div class="a" style="left:905.4px;top:191.6px;width:25px;height:9px;background:#474747;border-left:0.5px solid #333;border-right:0.5px solid #333"></div>
<div class="t" style="left:865.9px;top:193px;font-size:6.3px;letter-spacing:-0.036px;color:#f4f4f4;">Color Sliders</div>
<div class="t" style="left:909.9px;top:193px;font-size:6.3px;letter-spacing:-0.000px;color:#f4f4f4;">Mixer</div>
<div class="t" style="left:948.8px;top:193px;font-size:6.3px;letter-spacing:-0.221px;color:#f4f4f4;">Update Coolorus!</div>
<div class="a" style="left:862.2px;top:200.6px;width:135.3px;height:52.4px;background:#535353;"></div>
<div class="a" style="left:867.6px;top:204.3px;width:99.6px;height:11.3px;background:#2e2e2e;"></div>
<div class="a" style="left:868.1px;top:204.8px;width:98.6px;height:10.3px;background:#f00;background:linear-gradient(90deg,#ff0000,#ffff00 16.7%,#00ff00 33.3%,#00ffff 50%,#0000ff 66.7%,#ff00ff 83.3%,#ff0000)"></div>
<div class="a" style="left:867.6px;top:217.6px;width:99.6px;height:11.4px;background:#2e2e2e;"></div>
<div class="a" style="left:868.1px;top:218.1px;width:98.6px;height:10.4px;background:#00f;background:linear-gradient(90deg,#c0c0c0,#0038c0)"></div>
<div class="a" style="left:868.1px;top:218.1px;width:5.4px;height:10.4px;background:#c4c4c8;"></div>
<div class="a" style="left:867.6px;top:231.6px;width:99.6px;height:11.4px;background:#2e2e2e;"></div>
<div class="a" style="left:868.1px;top:232.1px;width:98.6px;height:10.4px;background:#000;background:linear-gradient(90deg,#000,#e9ecff)"></div>
<div class="a" style="left:868.1px;top:203.2px;width:0.5px;height:1.4px;background:#aaa;"></div>
<div class="a" style="left:917.4px;top:203.2px;width:0.5px;height:1.4px;background:#aaa;"></div>
<div class="a" style="left:966.2px;top:203.2px;width:0.5px;height:1.4px;background:#aaa;"></div>
<div class="a" style="left:868.1px;top:216.6px;width:0.5px;height:1.4px;background:#aaa;"></div>
<div class="a" style="left:917.4px;top:216.6px;width:0.5px;height:1.4px;background:#aaa;"></div>
<div class="a" style="left:966.2px;top:216.6px;width:0.5px;height:1.4px;background:#aaa;"></div>
<div class="a" style="left:868.1px;top:230.6px;width:0.5px;height:1.4px;background:#aaa;"></div>
<div class="a" style="left:917.4px;top:230.6px;width:0.5px;height:1.4px;background:#aaa;"></div>
<div class="a" style="left:966.2px;top:230.6px;width:0.5px;height:1.4px;background:#aaa;"></div>
<div class="a" style="left:927.6px;top:204.20000000000002px;width:2.8px;height:11.6px;background:#333;border-radius:0.8px"></div>
<div class="a" style="left:928.35px;top:204.70000000000002px;width:1.3px;height:10.6px;background:#c4c8d4;"></div>
<div class="a" style="left:872.2px;top:217.5px;width:2.8px;height:11.6px;background:#333;border-radius:0.8px"></div>
<div class="a" style="left:872.95px;top:218.0px;width:1.3px;height:10.6px;background:#c4c8d4;"></div>
<div class="a" style="left:940.8000000000001px;top:231.5px;width:2.8px;height:11.6px;background:#333;border-radius:0.8px"></div>
<div class="a" style="left:941.5500000000001px;top:232.0px;width:1.3px;height:10.6px;background:#c4c8d4;"></div>
<div class="t" style="left:863.4px;top:207.2px;font-size:5.2px;color:#909090">H</div>
<div class="t" style="left:863.4px;top:220.6px;font-size:5.2px;color:#909090">S</div>
<div class="t" style="left:863.4px;top:234.4px;font-size:5.2px;color:#909090">V</div>
<div class="a" style="left:969.4px;top:204.6px;width:16.2px;height:11px;background:#2c2c2c;box-shadow:0 0 0 0.5px #222;border-radius:1px 0 0 1px"></div>
<div class="t" style="left:969.4px;top:206.29999999999998px;width:16.2px;text-align:center;font-size:6.2px;letter-spacing:-0.2px;color:#f6f6f6">225</div>
<div class="a" style="left:985.6px;top:204.6px;width:5.4px;height:11px;background:#2a2a2a;border-radius:0 1px 1px 0"></div>
<div class="a" style="left:986px;top:205.2px;width:4.4px;height:9.8px;background:#727272;"></div>
<svg style="left:986.5px;top:206.6px" width="4" height="7" viewBox="0 0 4 7"><path d="M0.3,2.4 L1.8,0.4 L3.3,2.4Z M0.3,4.6 L1.8,6.6 L3.3,4.6Z" fill="#eee"/></svg>
<div class="t" style="left:991.6px;top:205.6px;font-size:5.4px;color:#9c9c9c">°</div>
<div class="a" style="left:969.4px;top:218px;width:16.2px;height:11px;background:#2c2c2c;box-shadow:0 0 0 0.5px #222;border-radius:1px 0 0 1px"></div>
<div class="t" style="left:969.4px;top:219.7px;width:16.2px;text-align:center;font-size:6.2px;letter-spacing:-0.2px;color:#f6f6f6">6</div>
<div class="a" style="left:985.6px;top:218px;width:5.4px;height:11px;background:#2a2a2a;border-radius:0 1px 1px 0"></div>
<div class="a" style="left:986px;top:218.6px;width:4.4px;height:9.8px;background:#727272;"></div>
<svg style="left:986.5px;top:220px" width="4" height="7" viewBox="0 0 4 7"><path d="M0.3,2.4 L1.8,0.4 L3.3,2.4Z M0.3,4.6 L1.8,6.6 L3.3,4.6Z" fill="#eee"/></svg>
<div class="t" style="left:991.6px;top:221px;font-size:5.4px;color:#9c9c9c">%</div>
<div class="a" style="left:969.4px;top:231.8px;width:16.2px;height:11px;background:#2c2c2c;box-shadow:0 0 0 0.5px #222;border-radius:1px 0 0 1px"></div>
<div class="t" style="left:969.4px;top:233.5px;width:16.2px;text-align:center;font-size:6.2px;letter-spacing:-0.2px;color:#f6f6f6">75</div>
<div class="a" style="left:985.6px;top:231.8px;width:5.4px;height:11px;background:#2a2a2a;border-radius:0 1px 1px 0"></div>
<div class="a" style="left:986px;top:232.4px;width:4.4px;height:9.8px;background:#727272;"></div>
<svg style="left:986.5px;top:233.8px" width="4" height="7" viewBox="0 0 4 7"><path d="M0.3,2.4 L1.8,0.4 L3.3,2.4Z M0.3,4.6 L1.8,6.6 L3.3,4.6Z" fill="#eee"/></svg>
<div class="t" style="left:991.6px;top:234.8px;font-size:5.4px;color:#9c9c9c">%</div>
<div class="t" style="left:867.3px;top:245.2px;font-size:4.8px;letter-spacing:-0.207px;color:#747474;">MODE:</div>
<div class="t" style="left:884.2px;top:245.2px;font-size:4.8px;letter-spacing:-0.367px;color:#a8a8a8;">RGB</div>
<div class="a" style="left:896px;top:244.2px;width:13.2px;height:8.2px;background:#3c3c3c;"></div>
<div class="t" style="left:897.9px;top:245.2px;font-size:4.8px;letter-spacing:-0.257px;color:#ffffff;font-weight:bold;">HSV</div>
<div class="t" style="left:912.1px;top:245.2px;font-size:4.8px;letter-spacing:-0.424px;color:#a8a8a8;">LAB</div>
<div class="t" style="left:925.3px;top:245.2px;font-size:4.8px;letter-spacing:-0.167px;color:#a8a8a8;">CMYK</div>
<div class="t" style="left:944px;top:245.2px;font-size:4.8px;letter-spacing:-0.288px;color:#a8a8a8;">GRAYSCALE</div>
<div class="a" style="left:862.2px;top:253px;width:135.3px;height:1.4px;background:#2c2c2c;"></div>
<div class="a" style="left:862.2px;top:254.3px;width:135.3px;height:9px;background:#424242;"></div>
<div class="a" style="left:862.2px;top:254.6px;width:29.8px;height:8.8px;background:#535353;border-radius:1px 1px 0 0;border-top:0.5px solid #6a6a6a;border-right:0.5px solid #383838"></div>
<div class="t" style="left:865.3px;top:256.2px;font-size:5.4px;letter-spacing:-0.452px;color:#e2e8f2;font-weight:bold;">Swatches</div>
<svg style="left:988.3px;top:258px" width="3" height="2"><path d="M0,0 L2.6,0 L1.3,1.6Z" fill="#ddd"/></svg>
<div class="a" style="left:992px;top:256.6px;width:4px;height:4.6px;background:#6a6a6a;"></div>
<div class="a" style="left:862.2px;top:263.3px;width:135.3px;height:112.2px;background:#474747;"></div>
<div class="a" style="left:989.2px;top:263.3px;width:8.3px;height:112.2px;background:#3f3f3f;border-left:0.5px solid #3a3a3a"></div>
<svg style="left:861.2px;top:263.6px" width="126" height="45" viewBox="0 0 126 45"><rect x="0.30" y="0.30" width="5.65" height="5.64" fill="#e00000"/><path d="M0.30,5.94 h5.65 v-5.64" stroke="rgba(0,0,0,.28)" stroke-width="0.5" fill="none"/><rect x="6.55" y="0.30" width="5.65" height="5.64" fill="#ffff40"/><path d="M6.55,5.94 h5.65 v-5.64" stroke="rgba(0,0,0,.28)" stroke-width="0.5" fill="none"/><rect x="12.80" y="0.30" width="5.65" height="5.64" fill="#80ff40"/><path d="M12.80,5.94 h5.65 v-5.64" stroke="rgba(0,0,0,.28)" stroke-width="0.5" fill="none"/><rect x="19.05" y="0.30" width="5.65" height="5.64" fill="#80ffff"/><path d="M19.05,5.94 h5.65 v-5.64" stroke="rgba(0,0,0,.28)" stroke-width="0.5" fill="none"/><rect x="25.30" y="0.30" width="5.65" height="5.64" fill="#0000ff"/><path d="M25.30,5.94 h5.65 v-5.64" stroke="rgba(0,0,0,.28)" stroke-width="0.5" fill="none"/><rect x="31.55" y="0.30" width="5.65" height="5.64" fill="#e000ff"/><path d="M31.55,5.94 h5.65 v-5.64" stroke="rgba(0,0,0,.28)" stroke-width="0.5" fill="none"/><rect x="37.80" y="0.30" width="5.65" height="5.64" fill="#ffffff"/><path d="M37.80,5.94 h5.65 v-5.64" stroke="rgba(0,0,0,.28)" stroke-width="0.5" fill="none"/><rect x="44.05" y="0.30" width="5.65" height="5.64" fill="#ebebeb"/><path d="M44.05,5.94 h5.65 v-5.64" stroke="rgba(0,0,0,.28)" stroke-width="0.5" fill="none"/><rect x="50.30" y="0.30" width="5.65" height="5.64" fill="#e1e1e1"/><path d="M50.30,5.94 h5.65 v-5.64" stroke="rgba(0,0,0,.28)" stroke-width="0.5" fill="none"/><rect x="56.55" y="0.30" width="5.65" height="5.64" fill="#d7d7d7"/><path d="M56.55,5.94 h5.65 v-5.64" stroke="rgba(0,0,0,.28)" stroke-width="0.5" fill="none"/><rect x="62.80" y="0.30" width="5.65" height="5.64" fill="#cdcdcd"/><path d="M62.80,5.94 h5.65 v-5.64" stroke="rgba(0,0,0,.28)" stroke-width="0.5" fill="none"/><rect x="69.05" y="0.30" width="5.65" height="5.64" fill="#c3c3c3"/><path d="M69.05,5.94 h5.65 v-5.64" stroke="rgba(0,0,0,.28)" stroke-width="0.5" fill="none"/><rect x="75.30" y="0.30" width="5.65" height="5.64" fill="#b9b9b9"/><path d="M75.30,5.94 h5.65 v-5.64" stroke="rgba(0,0,0,.28)" stroke-width="0.5" fill="none"/><rect x="81.55" y="0.30" width="5.65" height="5.64" fill="#afafaf"/><path d="M81.55,5.94 h5.65 v-5.64" stroke="rgba(0,0,0,.28)" stroke-width="0.5" fill="none"/><rect x="87.80" y="0.30" width="5.65" height="5.64" fill="#a5a5a5"/><path d="M87.80,5.94 h5.65 v-5.64" stroke="rgba(0,0,0,.28)" stroke-width="0.5" fill="none"/><rect x="94.05" y="0.30" width="5.65" height="5.64" fill="#9b9b9b"/><path d="M94.05,5.94 h5.65 v-5.64" stroke="rgba(0,0,0,.28)" stroke-width="0.5" fill="none"/><rect x="100.30" y="0.30" width="5.65" height="5.64" fill="#d82a30"/><path d="M100.30,5.94 h5.65 v-5.64" stroke="rgba(0,0,0,.28)" stroke-width="0.5" fill="none"/><rect x="106.55" y="0.30" width="5.65" height="5.64" fill="#fff030"/><path d="M106.55,5.94 h5.65 v-5.64" stroke="rgba(0,0,0,.28)" stroke-width="0.5" fill="none"/><rect x="112.80" y="0.30" width="5.65" height="5.64" fill="#30a458"/><path d="M112.80,5.94 h5.65 v-5.64" stroke="rgba(0,0,0,.28)" stroke-width="0.5" fill="none"/><rect x="119.05" y="0.30" width="5.65" height="5.64" fill="#00aaee"/><path d="M119.05,5.94 h5.65 v-5.64" stroke="rgba(0,0,0,.28)" stroke-width="0.5" fill="none"/><rect x="0.30" y="6.54" width="5.65" height="5.64" fill="#2e3192"/><path d="M0.30,12.18 h5.65 v-5.64" stroke="rgba(0,0,0,.28)" stroke-width="0.5" fill="none"/><rect x="6.55" y="6.54" width="5.65" height="5.64" fill="#d4008c"/><path d="M6.55,12.18 h5.65 v-5.64" stroke="rgba(0,0,0,.28)" stroke-width="0.5" fill="none"/><rect x="12.80" y="6.54" width="5.65" height="5.64" fill="#8c8c8c"/><path d="M12.80,12.18 h5.65 v-5.64" stroke="rgba(0,0,0,.28)" stroke-width="0.5" fill="none"/><rect x="19.05" y="6.54" width="5.65" height="5.64" fill="#808080"/><path d="M19.05,12.18 h5.65 v-5.64" stroke="rgba(0,0,0,.28)" stroke-width="0.5" fill="none"/><rect x="25.30" y="6.54" width="5.65" height="5.64" fill="#737373"/><path d="M25.30,12.18 h5.65 v-5.64" stroke="rgba(0,0,0,.28)" stroke-width="0.5" fill="none"/><rect x="31.55" y="6.54" width="5.65" height="5.64" fill="#666666"/><path d="M31.55,12.18 h5.65 v-5.64" stroke="rgba(0,0,0,.28)" stroke-width="0.5" fill="none"/><rect x="37.80" y="6.54" width="5.65" height="5.64" fill="#595959"/><path d="M37.80,12.18 h5.65 v-5.64" stroke="rgba(0,0,0,.28)" stroke-width="0.5" fill="none"/><rect x="44.05" y="6.54" width="5.65" height="5.64" fill="#4a4a4a"/><path d="M44.05,12.18 h5.65 v-5.64" stroke="rgba(0,0,0,.28)" stroke-width="0.5" fill="none"/><rect x="50.30" y="6.54" width="5.65" height="5.64" fill="#3c3c3c"/><path d="M50.30,12.18 h5.65 v-5.64" stroke="rgba(0,0,0,.28)" stroke-width="0.5" fill="none"/><rect x="56.55" y="6.54" width="5.65" height="5.64" fill="#2d2d2d"/><path d="M56.55,12.18 h5.65 v-5.64" stroke="rgba(0,0,0,.28)" stroke-width="0.5" fill="none"/><rect x="62.80" y="6.54" width="5.65" height="5.64" fill="#1a1a1a"/><path d="M62.80,12.18 h5.65 v-5.64" stroke="rgba(0,0,0,.28)" stroke-width="0.5" fill="none"/><rect x="69.05" y="6.54" width="5.65" height="5.64" fill="#000000"/><path d="M69.05,12.18 h5.65 v-5.64" stroke="rgba(0,0,0,.28)" stroke-width="0.5" fill="none"/><rect x="75.30" y="6.54" width="5.65" height="5.64" fill="#e9a184"/><path d="M75.30,12.18 h5.65 v-5.64" stroke="rgba(0,0,0,.28)" stroke-width="0.5" fill="none"/><rect x="81.55" y="6.54" width="5.65" height="5.64" fill="#efb288"/><path d="M81.55,12.18 h5.65 v-5.64" stroke="rgba(0,0,0,.28)" stroke-width="0.5" fill="none"/><rect x="87.80" y="6.54" width="5.65" height="5.64" fill="#f0c890"/><path d="M87.80,12.18 h5.65 v-5.64" stroke="rgba(0,0,0,.28)" stroke-width="0.5" fill="none"/><rect x="94.05" y="6.54" width="5.65" height="5.64" fill="#fff799"/><path d="M94.05,12.18 h5.65 v-5.64" stroke="rgba(0,0,0,.28)" stroke-width="0.5" fill="none"/><rect x="100.30" y="6.54" width="5.65" height="5.64" fill="#d4e4a0"/><path d="M100.30,12.18 h5.65 v-5.64" stroke="rgba(0,0,0,.28)" stroke-width="0.5" fill="none"/><rect x="106.55" y="6.54" width="5.65" height="5.64" fill="#b4d8a0"/><path d="M106.55,12.18 h5.65 v-5.64" stroke="rgba(0,0,0,.28)" stroke-width="0.5" fill="none"/><rect x="112.80" y="6.54" width="5.65" height="5.64" fill="#a0d0a8"/><path d="M112.80,12.18 h5.65 v-5.64" stroke="rgba(0,0,0,.28)" stroke-width="0.5" fill="none"/><rect x="119.05" y="6.54" width="5.65" height="5.64" fill="#98d0cc"/><path d="M119.05,12.18 h5.65 v-5.64" stroke="rgba(0,0,0,.28)" stroke-width="0.5" fill="none"/><rect x="0.30" y="12.78" width="5.65" height="5.64" fill="#8ed0f8"/><path d="M0.30,18.42 h5.65 v-5.64" stroke="rgba(0,0,0,.28)" stroke-width="0.5" fill="none"/><rect x="6.55" y="12.78" width="5.65" height="5.64" fill="#8eb0e4"/><path d="M6.55,18.42 h5.65 v-5.64" stroke="rgba(0,0,0,.28)" stroke-width="0.5" fill="none"/><rect x="12.80" y="12.78" width="5.65" height="5.64" fill="#8c98d4"/><path d="M12.80,18.42 h5.65 v-5.64" stroke="rgba(0,0,0,.28)" stroke-width="0.5" fill="none"/><rect x="19.05" y="12.78" width="5.65" height="5.64" fill="#9088cc"/><path d="M19.05,18.42 h5.65 v-5.64" stroke="rgba(0,0,0,.28)" stroke-width="0.5" fill="none"/><rect x="25.30" y="12.78" width="5.65" height="5.64" fill="#a88ccc"/><path d="M25.30,18.42 h5.65 v-5.64" stroke="rgba(0,0,0,.28)" stroke-width="0.5" fill="none"/><rect x="31.55" y="12.78" width="5.65" height="5.64" fill="#c08ccc"/><path d="M31.55,18.42 h5.65 v-5.64" stroke="rgba(0,0,0,.28)" stroke-width="0.5" fill="none"/><rect x="37.80" y="12.78" width="5.65" height="5.64" fill="#e890c8"/><path d="M37.80,18.42 h5.65 v-5.64" stroke="rgba(0,0,0,.28)" stroke-width="0.5" fill="none"/><rect x="44.05" y="12.78" width="5.65" height="5.64" fill="#f098a8"/><path d="M44.05,18.42 h5.65 v-5.64" stroke="rgba(0,0,0,.28)" stroke-width="0.5" fill="none"/><rect x="50.30" y="12.78" width="5.65" height="5.64" fill="#e87050"/><path d="M50.30,18.42 h5.65 v-5.64" stroke="rgba(0,0,0,.28)" stroke-width="0.5" fill="none"/><rect x="56.55" y="12.78" width="5.65" height="5.64" fill="#f09050"/><path d="M56.55,18.42 h5.65 v-5.64" stroke="rgba(0,0,0,.28)" stroke-width="0.5" fill="none"/><rect x="62.80" y="12.78" width="5.65" height="5.64" fill="#f8b058"/><path d="M62.80,18.42 h5.65 v-5.64" stroke="rgba(0,0,0,.28)" stroke-width="0.5" fill="none"/><rect x="69.05" y="12.78" width="5.65" height="5.64" fill="#fff468"/><path d="M69.05,18.42 h5.65 v-5.64" stroke="rgba(0,0,0,.28)" stroke-width="0.5" fill="none"/><rect x="75.30" y="12.78" width="5.65" height="5.64" fill="#b4d870"/><path d="M75.30,18.42 h5.65 v-5.64" stroke="rgba(0,0,0,.28)" stroke-width="0.5" fill="none"/><rect x="81.55" y="12.78" width="5.65" height="5.64" fill="#88c878"/><path d="M81.55,18.42 h5.65 v-5.64" stroke="rgba(0,0,0,.28)" stroke-width="0.5" fill="none"/><rect x="87.80" y="12.78" width="5.65" height="5.64" fill="#70c080"/><path d="M87.80,18.42 h5.65 v-5.64" stroke="rgba(0,0,0,.28)" stroke-width="0.5" fill="none"/><rect x="94.05" y="12.78" width="5.65" height="5.64" fill="#68c0c0"/><path d="M94.05,18.42 h5.65 v-5.64" stroke="rgba(0,0,0,.28)" stroke-width="0.5" fill="none"/><rect x="100.30" y="12.78" width="5.65" height="5.64" fill="#58c0f0"/><path d="M100.30,18.42 h5.65 v-5.64" stroke="rgba(0,0,0,.28)" stroke-width="0.5" fill="none"/><rect x="106.55" y="12.78" width="5.65" height="5.64" fill="#5890d8"/><path d="M106.55,18.42 h5.65 v-5.64" stroke="rgba(0,0,0,.28)" stroke-width="0.5" fill="none"/><rect x="112.80" y="12.78" width="5.65" height="5.64" fill="#5870c8"/><path d="M112.80,18.42 h5.65 v-5.64" stroke="rgba(0,0,0,.28)" stroke-width="0.5" fill="none"/><rect x="119.05" y="12.78" width="5.65" height="5.64" fill="#6058b8"/><path d="M119.05,18.42 h5.65 v-5.64" stroke="rgba(0,0,0,.28)" stroke-width="0.5" fill="none"/><rect x="0.30" y="19.02" width="5.65" height="5.64" fill="#8858b8"/><path d="M0.30,24.66 h5.65 v-5.64" stroke="rgba(0,0,0,.28)" stroke-width="0.5" fill="none"/><rect x="6.55" y="19.02" width="5.65" height="5.64" fill="#a858b8"/><path d="M6.55,24.66 h5.65 v-5.64" stroke="rgba(0,0,0,.28)" stroke-width="0.5" fill="none"/><rect x="12.80" y="19.02" width="5.65" height="5.64" fill="#e060a8"/><path d="M12.80,24.66 h5.65 v-5.64" stroke="rgba(0,0,0,.28)" stroke-width="0.5" fill="none"/><rect x="19.05" y="19.02" width="5.65" height="5.64" fill="#e86080"/><path d="M19.05,24.66 h5.65 v-5.64" stroke="rgba(0,0,0,.28)" stroke-width="0.5" fill="none"/><rect x="25.30" y="19.02" width="5.65" height="5.64" fill="#e02830"/><path d="M25.30,24.66 h5.65 v-5.64" stroke="rgba(0,0,0,.28)" stroke-width="0.5" fill="none"/><rect x="31.55" y="19.02" width="5.65" height="5.64" fill="#e87028"/><path d="M31.55,24.66 h5.65 v-5.64" stroke="rgba(0,0,0,.28)" stroke-width="0.5" fill="none"/><rect x="37.80" y="19.02" width="5.65" height="5.64" fill="#f09828"/><path d="M37.80,24.66 h5.65 v-5.64" stroke="rgba(0,0,0,.28)" stroke-width="0.5" fill="none"/><rect x="44.05" y="19.02" width="5.65" height="5.64" fill="#fff030"/><path d="M44.05,24.66 h5.65 v-5.64" stroke="rgba(0,0,0,.28)" stroke-width="0.5" fill="none"/><rect x="50.30" y="19.02" width="5.65" height="5.64" fill="#a0d048"/><path d="M50.30,24.66 h5.65 v-5.64" stroke="rgba(0,0,0,.28)" stroke-width="0.5" fill="none"/><rect x="56.55" y="19.02" width="5.65" height="5.64" fill="#58b850"/><path d="M56.55,24.66 h5.65 v-5.64" stroke="rgba(0,0,0,.28)" stroke-width="0.5" fill="none"/><rect x="62.80" y="19.02" width="5.65" height="5.64" fill="#28a858"/><path d="M62.80,24.66 h5.65 v-5.64" stroke="rgba(0,0,0,.28)" stroke-width="0.5" fill="none"/><rect x="69.05" y="19.02" width="5.65" height="5.64" fill="#18a8a0"/><path d="M69.05,24.66 h5.65 v-5.64" stroke="rgba(0,0,0,.28)" stroke-width="0.5" fill="none"/><rect x="75.30" y="19.02" width="5.65" height="5.64" fill="#00a8e8"/><path d="M75.30,24.66 h5.65 v-5.64" stroke="rgba(0,0,0,.28)" stroke-width="0.5" fill="none"/><rect x="81.55" y="19.02" width="5.65" height="5.64" fill="#2078c8"/><path d="M81.55,24.66 h5.65 v-5.64" stroke="rgba(0,0,0,.28)" stroke-width="0.5" fill="none"/><rect x="87.80" y="19.02" width="5.65" height="5.64" fill="#2858a8"/><path d="M87.80,24.66 h5.65 v-5.64" stroke="rgba(0,0,0,.28)" stroke-width="0.5" fill="none"/><rect x="94.05" y="19.02" width="5.65" height="5.64" fill="#303090"/><path d="M94.05,24.66 h5.65 v-5.64" stroke="rgba(0,0,0,.28)" stroke-width="0.5" fill="none"/><rect x="100.30" y="19.02" width="5.65" height="5.64" fill="#602890"/><path d="M100.30,24.66 h5.65 v-5.64" stroke="rgba(0,0,0,.28)" stroke-width="0.5" fill="none"/><rect x="106.55" y="19.02" width="5.65" height="5.64" fill="#902890"/><path d="M106.55,24.66 h5.65 v-5.64" stroke="rgba(0,0,0,.28)" stroke-width="0.5" fill="none"/><rect x="112.80" y="19.02" width="5.65" height="5.64" fill="#e000a0"/><path d="M112.80,24.66 h5.65 v-5.64" stroke="rgba(0,0,0,.28)" stroke-width="0.5" fill="none"/><rect x="119.05" y="19.02" width="5.65" height="5.64" fill="#e0186c"/><path d="M119.05,24.66 h5.65 v-5.64" stroke="rgba(0,0,0,.28)" stroke-width="0.5" fill="none"/><rect x="0.30" y="25.26" width="5.65" height="5.64" fill="#a01820"/><path d="M0.30,30.90 h5.65 v-5.64" stroke="rgba(0,0,0,.28)" stroke-width="0.5" fill="none"/><rect x="6.55" y="25.26" width="5.65" height="5.64" fill="#a85018"/><path d="M6.55,30.90 h5.65 v-5.64" stroke="rgba(0,0,0,.28)" stroke-width="0.5" fill="none"/><rect x="12.80" y="25.26" width="5.65" height="5.64" fill="#a86c18"/><path d="M12.80,30.90 h5.65 v-5.64" stroke="rgba(0,0,0,.28)" stroke-width="0.5" fill="none"/><rect x="19.05" y="25.26" width="5.65" height="5.64" fill="#b4a818"/><path d="M19.05,30.90 h5.65 v-5.64" stroke="rgba(0,0,0,.28)" stroke-width="0.5" fill="none"/><rect x="25.30" y="25.26" width="5.65" height="5.64" fill="#709830"/><path d="M25.30,30.90 h5.65 v-5.64" stroke="rgba(0,0,0,.28)" stroke-width="0.5" fill="none"/><rect x="31.55" y="25.26" width="5.65" height="5.64" fill="#408838"/><path d="M31.55,30.90 h5.65 v-5.64" stroke="rgba(0,0,0,.28)" stroke-width="0.5" fill="none"/><rect x="37.80" y="25.26" width="5.65" height="5.64" fill="#208848"/><path d="M37.80,30.90 h5.65 v-5.64" stroke="rgba(0,0,0,.28)" stroke-width="0.5" fill="none"/><rect x="44.05" y="25.26" width="5.65" height="5.64" fill="#107878"/><path d="M44.05,30.90 h5.65 v-5.64" stroke="rgba(0,0,0,.28)" stroke-width="0.5" fill="none"/><rect x="50.30" y="25.26" width="5.65" height="5.64" fill="#0878a8"/><path d="M50.30,30.90 h5.65 v-5.64" stroke="rgba(0,0,0,.28)" stroke-width="0.5" fill="none"/><rect x="56.55" y="25.26" width="5.65" height="5.64" fill="#105890"/><path d="M56.55,30.90 h5.65 v-5.64" stroke="rgba(0,0,0,.28)" stroke-width="0.5" fill="none"/><rect x="62.80" y="25.26" width="5.65" height="5.64" fill="#184080"/><path d="M62.80,30.90 h5.65 v-5.64" stroke="rgba(0,0,0,.28)" stroke-width="0.5" fill="none"/><rect x="69.05" y="25.26" width="5.65" height="5.64" fill="#202070"/><path d="M69.05,30.90 h5.65 v-5.64" stroke="rgba(0,0,0,.28)" stroke-width="0.5" fill="none"/><rect x="75.30" y="25.26" width="5.65" height="5.64" fill="#401868"/><path d="M75.30,30.90 h5.65 v-5.64" stroke="rgba(0,0,0,.28)" stroke-width="0.5" fill="none"/><rect x="81.55" y="25.26" width="5.65" height="5.64" fill="#601868"/><path d="M81.55,30.90 h5.65 v-5.64" stroke="rgba(0,0,0,.28)" stroke-width="0.5" fill="none"/><rect x="87.80" y="25.26" width="5.65" height="5.64" fill="#a00070"/><path d="M87.80,30.90 h5.65 v-5.64" stroke="rgba(0,0,0,.28)" stroke-width="0.5" fill="none"/><rect x="94.05" y="25.26" width="5.65" height="5.64" fill="#a00848"/><path d="M94.05,30.90 h5.65 v-5.64" stroke="rgba(0,0,0,.28)" stroke-width="0.5" fill="none"/><rect x="100.30" y="25.26" width="5.65" height="5.64" fill="#780000"/><path d="M100.30,30.90 h5.65 v-5.64" stroke="rgba(0,0,0,.28)" stroke-width="0.5" fill="none"/><rect x="106.55" y="25.26" width="5.65" height="5.64" fill="#804000"/><path d="M106.55,30.90 h5.65 v-5.64" stroke="rgba(0,0,0,.28)" stroke-width="0.5" fill="none"/><rect x="112.80" y="25.26" width="5.65" height="5.64" fill="#805800"/><path d="M112.80,30.90 h5.65 v-5.64" stroke="rgba(0,0,0,.28)" stroke-width="0.5" fill="none"/><rect x="119.05" y="25.26" width="5.65" height="5.64" fill="#888810"/><path d="M119.05,30.90 h5.65 v-5.64" stroke="rgba(0,0,0,.28)" stroke-width="0.5" fill="none"/><rect x="0.30" y="31.50" width="5.65" height="5.64" fill="#507820"/><path d="M0.30,37.14 h5.65 v-5.64" stroke="rgba(0,0,0,.28)" stroke-width="0.5" fill="none"/><rect x="6.55" y="31.50" width="5.65" height="5.64" fill="#307030"/><path d="M6.55,37.14 h5.65 v-5.64" stroke="rgba(0,0,0,.28)" stroke-width="0.5" fill="none"/><rect x="12.80" y="31.50" width="5.65" height="5.64" fill="#106838"/><path d="M12.80,37.14 h5.65 v-5.64" stroke="rgba(0,0,0,.28)" stroke-width="0.5" fill="none"/><rect x="19.05" y="31.50" width="5.65" height="5.64" fill="#006060"/><path d="M19.05,37.14 h5.65 v-5.64" stroke="rgba(0,0,0,.28)" stroke-width="0.5" fill="none"/><rect x="25.30" y="31.50" width="5.65" height="5.64" fill="#006088"/><path d="M25.30,37.14 h5.65 v-5.64" stroke="rgba(0,0,0,.28)" stroke-width="0.5" fill="none"/><rect x="31.55" y="31.50" width="5.65" height="5.64" fill="#004878"/><path d="M31.55,37.14 h5.65 v-5.64" stroke="rgba(0,0,0,.28)" stroke-width="0.5" fill="none"/><rect x="37.80" y="31.50" width="5.65" height="5.64" fill="#003060"/><path d="M37.80,37.14 h5.65 v-5.64" stroke="rgba(0,0,0,.28)" stroke-width="0.5" fill="none"/><rect x="44.05" y="31.50" width="5.65" height="5.64" fill="#100058"/><path d="M44.05,37.14 h5.65 v-5.64" stroke="rgba(0,0,0,.28)" stroke-width="0.5" fill="none"/><rect x="50.30" y="31.50" width="5.65" height="5.64" fill="#300058"/><path d="M50.30,37.14 h5.65 v-5.64" stroke="rgba(0,0,0,.28)" stroke-width="0.5" fill="none"/><rect x="56.55" y="31.50" width="5.65" height="5.64" fill="#480058"/><path d="M56.55,37.14 h5.65 v-5.64" stroke="rgba(0,0,0,.28)" stroke-width="0.5" fill="none"/><rect x="62.80" y="31.50" width="5.65" height="5.64" fill="#780050"/><path d="M62.80,37.14 h5.65 v-5.64" stroke="rgba(0,0,0,.28)" stroke-width="0.5" fill="none"/><rect x="69.05" y="31.50" width="5.65" height="5.64" fill="#780030"/><path d="M69.05,37.14 h5.65 v-5.64" stroke="rgba(0,0,0,.28)" stroke-width="0.5" fill="none"/><rect x="75.30" y="31.50" width="5.65" height="5.64" fill="#c8b090"/><path d="M75.30,37.14 h5.65 v-5.64" stroke="rgba(0,0,0,.28)" stroke-width="0.5" fill="none"/><rect x="81.55" y="31.50" width="5.65" height="5.64" fill="#988878"/><path d="M81.55,37.14 h5.65 v-5.64" stroke="rgba(0,0,0,.28)" stroke-width="0.5" fill="none"/><rect x="87.80" y="31.50" width="5.65" height="5.64" fill="#706050"/><path d="M87.80,37.14 h5.65 v-5.64" stroke="rgba(0,0,0,.28)" stroke-width="0.5" fill="none"/><rect x="94.05" y="31.50" width="5.65" height="5.64" fill="#504840"/><path d="M94.05,37.14 h5.65 v-5.64" stroke="rgba(0,0,0,.28)" stroke-width="0.5" fill="none"/><rect x="100.30" y="31.50" width="5.65" height="5.64" fill="#383430"/><path d="M100.30,37.14 h5.65 v-5.64" stroke="rgba(0,0,0,.28)" stroke-width="0.5" fill="none"/><rect x="106.55" y="31.50" width="5.65" height="5.64" fill="#c8a070"/><path d="M106.55,37.14 h5.65 v-5.64" stroke="rgba(0,0,0,.28)" stroke-width="0.5" fill="none"/><rect x="112.80" y="31.50" width="5.65" height="5.64" fill="#a88050"/><path d="M112.80,37.14 h5.65 v-5.64" stroke="rgba(0,0,0,.28)" stroke-width="0.5" fill="none"/><rect x="119.05" y="31.50" width="5.65" height="5.64" fill="#886038"/><path d="M119.05,37.14 h5.65 v-5.64" stroke="rgba(0,0,0,.28)" stroke-width="0.5" fill="none"/><rect x="0.30" y="37.74" width="5.65" height="5.64" fill="#785028"/><path d="M0.30,43.38 h5.65 v-5.64" stroke="rgba(0,0,0,.28)" stroke-width="0.5" fill="none"/><rect x="6.55" y="37.74" width="5.65" height="5.64" fill="#603818"/><path d="M6.55,43.38 h5.65 v-5.64" stroke="rgba(0,0,0,.28)" stroke-width="0.5" fill="none"/><rect x="12.80" y="37.74" width="5.65" height="5.64" fill="#402818"/><path d="M12.80,43.38 h5.65 v-5.64" stroke="rgba(0,0,0,.28)" stroke-width="0.5" fill="none"/><rect x="19.05" y="37.74" width="5.65" height="5.64" fill="#dcdcdc"/><path d="M19.05,43.38 h5.65 v-5.64" stroke="rgba(0,0,0,.28)" stroke-width="0.5" fill="none"/><rect x="25.30" y="37.74" width="5.65" height="5.64" fill="#fce8c8"/><path d="M25.30,43.38 h5.65 v-5.64" stroke="rgba(0,0,0,.28)" stroke-width="0.5" fill="none"/><rect x="31.55" y="37.74" width="5.65" height="5.64" fill="#f8d8a8"/><path d="M31.55,43.38 h5.65 v-5.64" stroke="rgba(0,0,0,.28)" stroke-width="0.5" fill="none"/><rect x="37.80" y="37.74" width="5.65" height="5.64" fill="#f4cc98"/><path d="M37.80,43.38 h5.65 v-5.64" stroke="rgba(0,0,0,.28)" stroke-width="0.5" fill="none"/><rect x="44.05" y="37.74" width="5.65" height="5.64" fill="#f0c088"/><path d="M44.05,43.38 h5.65 v-5.64" stroke="rgba(0,0,0,.28)" stroke-width="0.5" fill="none"/><rect x="50.30" y="37.74" width="5.65" height="5.64" fill="#ecb880"/><path d="M50.30,43.38 h5.65 v-5.64" stroke="rgba(0,0,0,.28)" stroke-width="0.5" fill="none"/><rect x="56.55" y="37.74" width="5.65" height="5.64" fill="#e8b078"/><path d="M56.55,43.38 h5.65 v-5.64" stroke="rgba(0,0,0,.28)" stroke-width="0.5" fill="none"/><rect x="62.80" y="37.74" width="5.65" height="5.64" fill="#e0a068"/><path d="M62.80,43.38 h5.65 v-5.64" stroke="rgba(0,0,0,.28)" stroke-width="0.5" fill="none"/><rect x="69.05" y="37.74" width="5.65" height="5.64" fill="#dc9860"/><path d="M69.05,43.38 h5.65 v-5.64" stroke="rgba(0,0,0,.28)" stroke-width="0.5" fill="none"/><rect x="75.30" y="37.74" width="5.65" height="5.64" fill="#c88850"/><path d="M75.30,43.38 h5.65 v-5.64" stroke="rgba(0,0,0,.28)" stroke-width="0.5" fill="none"/><rect x="81.55" y="37.74" width="5.65" height="5.64" fill="#b87040"/><path d="M81.55,43.38 h5.65 v-5.64" stroke="rgba(0,0,0,.28)" stroke-width="0.5" fill="none"/></svg>
<div class="a" style="left:862.2px;top:375.5px;width:135.3px;height:8.3px;background:#535353;border-top:0.6px solid #3e3e3e"></div>
<svg style="left:962.4px;top:377px" width="7" height="6" viewBox="0 0 7 6"><path d="M0.6,0.6 H6.2 V5.6 H0.6Z" fill="#d8d8d8"/><path d="M0.6,3 H3 V5.6 H0.6Z" fill="#535353"/><path d="M1,3.6 H2.6 V5.2 H1Z" fill="#d0d0d0"/></svg>
<svg style="left:976.8px;top:376.6px" width="6" height="7" viewBox="0 0 6 7"><path d="M0.4,1.6 H5.6 M2,1.4 V0.6 H4 V1.4 M1,2.2 L1.3,6.4 H4.7 L5,2.2Z" fill="#7a7a7a" stroke="#7a7a7a" stroke-width="0.6"/></svg>
<svg style="left:992px;top:378px" width="5" height="5" viewBox="0 0 5 5"><path d="M5,0 V5 H0Z" fill="#5e5e5e"/></svg>
<div class="a" style="left:862.2px;top:383.8px;width:135.3px;height:2.2px;background:#2c2c2c;"></div>
<div class="a" style="left:862.2px;top:386px;width:135.3px;height:8.6px;background:#424242;"></div>
<div class="a" style="left:862.2px;top:386.2px;width:22px;height:8.6px;background:#535353;border-radius:1px 1px 0 0;border-top:0.5px solid #6a6a6a;border-right:0.5px solid #383838"></div>
<div class="a" style="left:884.6px;top:386.4px;width:29px;height:8.2px;background:#4a4a4a;border-radius:1px 1px 0 0;border-right:0.5px solid #383838"></div>
<div class="a" style="left:914px;top:386.4px;width:20.6px;height:8.2px;background:#4a4a4a;border-radius:1px 1px 0 0;border-right:0.5px solid #383838"></div>
<div class="t" style="left:865.6px;top:388px;font-size:5.4px;letter-spacing:-0.536px;color:#e6ebf4;font-weight:bold;">Layers</div>
<div class="t" style="left:887.9px;top:388px;font-size:5.4px;letter-spacing:-0.227px;color:#a8a8a8;">Channels</div>
<div class="t" style="left:917.5px;top:388px;font-size:5.4px;letter-spacing:-0.122px;color:#a8a8a8;">Paths</div>
<svg style="left:988.3px;top:389.6px" width="3" height="2"><path d="M0,0 L2.6,0 L1.3,1.6Z" fill="#ddd"/></svg>
<div class="a" style="left:992px;top:388.2px;width:4px;height:4.6px;background:#6a6a6a;"></div>
<div class="a" style="left:862.2px;top:394.6px;width:135.3px;height:150.4px;background:#535353;"></div>
<div class="dd" style="left:864.5px;top:397.6px;width:35px;height:9px"></div>
<svg style="left:866.6px;top:399.6px" width="6" height="5" viewBox="0 0 6 5"><circle cx="3.6" cy="2" r="1.5" fill="none" stroke="#e0e0e0" stroke-width="0.6"/><path d="M2.4,3 L0.6,4.6" stroke="#e0e0e0" stroke-width="0.7"/></svg>
<div class="t" style="left:874.7px;top:399px;font-size:5.7px;letter-spacing:-0.102px;color:#ececec;">Kind</div>
<svg style="left:894.3px;top:399.2px" width="4" height="6"><path d="M0.3,2 L1.8,0.4 L3.3,2Z M0.3,3.6 L1.8,5.2 L3.3,3.6Z" fill="#eee"/></svg>
<svg style="left:906px;top:398.4px" width="8" height="7" viewBox="0 0 8 7"><rect x="0.5" y="0.5" width="7" height="5.8" fill="none" stroke="#d4d4d4" stroke-width="0.8"/><path d="M1.4,5.4 L3.2,3 L4.4,4.4 L5.4,3.6 L6.6,5.4Z" fill="#d4d4d4"/><circle cx="5.4" cy="2" r="0.7" fill="#d4d4d4"/></svg>
<svg style="left:918.8px;top:398.4px" width="7" height="7" viewBox="0 0 7 7"><circle cx="3.4" cy="3.4" r="2.8" fill="none" stroke="#d4d4d4" stroke-width="0.8"/><path d="M1.4,5.4 A2.8,2.8 0 0 1 5.4,1.4Z" fill="#d4d4d4"/></svg>
<div class="t" style="left:931.6px;top:397.4px;font-family:'Liberation Serif',serif;font-size:8.5px;line-height:9px;color:#dcdcdc">T</div>
<svg style="left:943.4px;top:398.2px" width="8" height="7" viewBox="0 0 8 7"><rect x="1.2" y="1.2" width="5.4" height="4.8" fill="none" stroke="#d4d4d4" stroke-width="0.7"/><rect x="0.3" y="0.3" width="1.6" height="1.6" fill="#d4d4d4"/><rect x="5.9" y="0.3" width="1.6" height="1.6" fill="#d4d4d4"/><rect x="0.3" y="5.2" width="1.6" height="1.6" fill="#d4d4d4"/><rect x="5.9" y="5.2" width="1.6" height="1.6" fill="#d4d4d4"/></svg>
<svg style="left:956.6px;top:398px" width="7" height="8" viewBox="0 0 7 8"><path d="M2,0.5 H5.2 L6.4,1.8 V6 H2Z" fill="none" stroke="#d4d4d4" stroke-width="0.7"/><rect x="0.4" y="3.6" width="3.4" height="3.6" fill="#d4d4d4"/></svg>
<div class="a" style="left:970.4px;top:398px;width:3.4px;height:8.6px;background:#3a3a3a;border-radius:1px;border:0.4px solid #2c2c2c"></div>
<div class="a" style="left:970.8px;top:398.4px;width:2.6px;height:3.4px;background:#8e8e8e;border-radius:0.8px"></div>
<div class="a" style="left:862.2px;top:408.2px;width:135.3px;height:0.5px;background:#424242;"></div>
<div class="dd" style="left:864.3px;top:412px;width:57.2px;height:9.2px"></div>
<div class="t" style="left:868.1px;top:413.7px;font-size:5.7px;letter-spacing:-0.445px;color:#ececec;">Normal</div>
<svg style="left:916.3px;top:413.8px" width="4" height="6"><path d="M0.3,2 L1.8,0.4 L3.3,2Z M0.3,3.6 L1.8,5.2 L3.3,3.6Z" fill="#eee"/></svg>
<div class="t" style="left:925px;top:413.6px;font-size:5.7px;letter-spacing:-0.238px;color:#ececec;">Opacity:</div>
<div class="a" style="left:947.2px;top:411.8px;width:17.4px;height:9.4px;background:#2f2f2f;box-shadow:0 0 0 0.5px #262626"></div>
<div class="t" style="left:949.5px;top:413.8px;font-size:5.3px;letter-spacing:-0.264px;color:#f0f0f0;">100%</div>
<div class="a" style="left:964.6px;top:411.8px;width:9.4px;height:9.4px;background:#6a6a6a;box-shadow:0 0 0 0.5px #2c2c2c;border-radius:0 1.5px 1.5px 0"></div>
<svg style="left:967.6px;top:416px" width="4" height="3"><path d="M0,0 L3.4,0 L1.7,2Z" fill="#f0f0f0"/></svg>
<div class="a" style="left:862.2px;top:423px;width:135.3px;height:0.5px;background:#424242;"></div>
<div class="t" style="left:865.1px;top:428.5px;font-size:5.7px;letter-spacing:-0.365px;color:#e6e6e6;">Lock:</div>
<svg style="left:882px;top:428px" width="7" height="7" viewBox="0 0 7 7"><rect x="0.4" y="0.4" width="6" height="6" fill="none" stroke="#d4d4d4" stroke-width="0.6"/><path d="M0.4,0.4 h2 v2 h-2z M4.4,0.4 h2 v2 h-2z M2.4,2.4 h2 v2 h-2z M0.4,4.4 h2 v2 h-2z M4.4,4.4 h2 v2 h-2z" fill="#d4d4d4"/></svg>
<svg style="left:892px;top:427.4px" width="9" height="8" viewBox="0 0 9 8"><path d="M8,0.8 L4,5" stroke="#d4d4d4" stroke-width="1" stroke-linecap="round"/><path d="M0.8,7 C2,7.2 3.4,6.6 4,5.6 L3,4.6 C2.6,5.6 1.8,6.4 0.8,7Z" fill="#d4d4d4"/></svg>
<svg style="left:904px;top:427.6px" width="8" height="8" viewBox="0 0 8 8"><path d="M4,0.8 V7.2 M0.8,4 H7.2" stroke="#d4d4d4" stroke-width="0.7"/><path d="M4,0 L5.2,1.6 H2.8Z M4,8 L5.2,6.4 H2.8Z M0,4 L1.6,2.8 V5.2Z M8,4 L6.4,2.8 V5.2Z" fill="#d4d4d4"/></svg>
<svg style="left:916.6px;top:427.4px" width="6" height="8" viewBox="0 0 6 8"><rect x="0.4" y="3.4" width="5.2" height="4.2" fill="#d4d4d4"/><path d="M1.4,3.4 V2.2 C1.4,0.4 4.6,0.4 4.6,2.2 V3.4" stroke="#d4d4d4" stroke-width="0.8" fill="none"/></svg>
<div class="t" style="left:936.6px;top:427.6px;font-size:5.7px;letter-spacing:-0.293px;color:#ececec;">Fill:</div>
<div class="a" style="left:947.2px;top:426.4px;width:17.4px;height:9.2px;background:#2f2f2f;box-shadow:0 0 0 0.5px #262626"></div>
<div class="t" style="left:949.5px;top:428.3px;font-size:5.3px;letter-spacing:-0.264px;color:#f0f0f0;">100%</div>
<div class="a" style="left:964.6px;top:426.4px;width:9.4px;height:9.2px;background:#6a6a6a;box-shadow:0 0 0 0.5px #2c2c2c;border-radius:0 1.5px 1.5px 0"></div>
<svg style="left:967.6px;top:430.4px" width="4" height="3"><path d="M0,0 L3.4,0 L1.7,2Z" fill="#f0f0f0"/></svg>
<div class="a" style="left:862.2px;top:437.2px;width:135.3px;height:0.6px;background:#3a3a3a;"></div>
<div class="a" style="left:862.2px;top:437.8px;width:127.8px;height:96.5px;background:#535353;"></div>
<div class="a" style="left:877.2px;top:437.8px;width:0.8px;height:96.5px;background:#404040;"></div>
<svg style="left:0;top:0" width="1000" height="534.3" viewBox="0 0 1000 534.3"><defs><pattern id="chk" width="4" height="4" patternUnits="userSpaceOnUse" x="879.7" y="441"><rect width="4" height="4" fill="#fff"/><rect width="2" height="2" fill="#cccccc"/><rect x="2" y="2" width="2" height="2" fill="#cccccc"/></pattern><clipPath id="lc"><rect x="862" y="437.8" width="130" height="96.5"/></clipPath></defs><g clip-path="url(#lc)"><rect x="862.2" y="459.08" width="128" height="0.8" fill="#3c3c3c"/><path d="M866.4,449.5 C867.9,447.2 870.6999999999999,447.2 872.1999999999999,449.5 C870.6999999999999,451.6 867.9,451.6 866.4,449.5Z" fill="#d6d6d6"/><circle cx="869.4" cy="449.50" r="1.15" fill="#4c4c4c"/><circle cx="869.0" cy="449.10" r="0.35" fill="#eee"/><rect x="879.7" y="441.00" width="16" height="16.8" fill="url(#chk)" stroke="#2a2a2a" stroke-width="0.6"/><text x="901" y="452.10" font-size="5.8" fill="#f0f0f0" font-family="Liberation Sans, sans-serif" textLength="29.2" lengthAdjust="spacing">Layer 0 copy</text><rect x="877.9" y="459.58" width="112.3" height="19.78" fill="#596679"/><rect x="862.2" y="479.26" width="128" height="0.8" fill="#3c3c3c"/><path d="M866.4,469.68 C867.9,467.38 870.6999999999999,467.38 872.1999999999999,469.68 C870.6999999999999,471.78000000000003 867.9,471.78000000000003 866.4,469.68Z" fill="#d6d6d6"/><circle cx="869.4" cy="469.68" r="1.15" fill="#4c4c4c"/><circle cx="869.0" cy="469.28" r="0.35" fill="#eee"/><rect x="878.5" y="459.98" width="18.4" height="19.2" fill="none" stroke="#fff" stroke-width="0.6" stroke-dasharray="14 2"/><rect x="879.7" y="461.18" width="16" height="16.8" fill="url(#chk)" stroke="#2a2a2a" stroke-width="0.6"/><circle cx="883.9000000000001" cy="473.78" r="2.2" fill="none" stroke="#b4b8cc" stroke-width="1.1"/><text x="901" y="472.28" font-size="5.8" fill="#f0f0f0" font-family="Liberation Sans, sans-serif" textLength="9.8" lengthAdjust="spacing">side</text><rect x="862.2" y="499.44" width="128" height="0.8" fill="#3c3c3c"/><path d="M866.4,489.86 C867.9,487.56 870.6999999999999,487.56 872.1999999999999,489.86 C870.6999999999999,491.96000000000004 867.9,491.96000000000004 866.4,489.86Z" fill="#d6d6d6"/><circle cx="869.4" cy="489.86" r="1.15" fill="#4c4c4c"/><circle cx="869.0" cy="489.46" r="0.35" fill="#eee"/><rect x="879.7" y="481.36" width="16" height="16.8" fill="url(#chk)" stroke="#2a2a2a" stroke-width="0.6"/><rect x="880.0" y="486.56" width="15.4" height="4.4" fill="#c89c54"/><text x="901" y="492.46" font-size="5.8" fill="#f0f0f0" font-family="Liberation Sans, sans-serif" textLength="34" lengthAdjust="spacing">Layer 2 copy 5</text><rect x="862.2" y="519.62" width="128" height="0.8" fill="#3c3c3c"/><path d="M866.4,510.04 C867.9,507.74 870.6999999999999,507.74 872.1999999999999,510.04 C870.6999999999999,512.14 867.9,512.14 866.4,510.04Z" fill="#d6d6d6"/><circle cx="869.4" cy="510.04" r="1.15" fill="#4c4c4c"/><circle cx="869.0" cy="509.64" r="0.35" fill="#eee"/><rect x="879.7" y="501.54" width="16" height="16.8" fill="url(#chk)" stroke="#2a2a2a" stroke-width="0.6"/><rect x="887.7" y="510.74" width="6.8" height="6.8" fill="#c6c8d8"/><text x="901" y="512.64" font-size="5.8" fill="#f0f0f0" font-family="Liberation Sans, sans-serif" textLength="29.6" lengthAdjust="spacing">Layer 2 copy</text><rect x="862.2" y="539.80" width="128" height="0.8" fill="#3c3c3c"/><path d="M866.4,530.22 C867.9,527.9200000000001 870.6999999999999,527.9200000000001 872.1999999999999,530.22 C870.6999999999999,532.32 867.9,532.32 866.4,530.22Z" fill="#d6d6d6"/><circle cx="869.4" cy="530.22" r="1.15" fill="#4c4c4c"/><circle cx="869.0" cy="529.82" r="0.35" fill="#eee"/><rect x="879.7" y="521.72" width="16" height="16.8" fill="url(#chk)" stroke="#2a2a2a" stroke-width="0.6"/><rect x="880.0" y="522.32" width="15.4" height="4.2" fill="#c8cad8"/><text x="901" y="532.82" font-size="5.8" fill="#f0f0f0" font-family="Liberation Sans, sans-serif" textLength="34" lengthAdjust="spacing">Layer 2 copy 3</text></g></svg>
<div class="a" style="left:990px;top:437.8px;width:7.5px;height:96.5px;background:#4d4d4d;border-left:0.5px solid #3c3c3c"></div>
<svg style="left:991.9px;top:441.6px" width="4" height="3"><path d="M0.2,2.4 L1.9,0.4 L3.6,2.4Z" fill="#e8e8e8"/></svg>
<svg style="left:991.9px;top:529.6px" width="4" height="3"><path d="M0.2,0.3 L1.9,2.3 L3.6,0.3Z" fill="#e8e8e8"/></svg>
<div class="a" style="left:991px;top:449px;width:5.8px;height:50px;background:#7a7a7a;border-radius:2px;background:linear-gradient(90deg,#868686,#707070)"></div>
<div class="a" style="left:862.2px;top:534.3px;width:135.3px;height:10.7px;background:#535353;border-top:0.6px solid #3a3a3a"></div>
<svg style="left:892px;top:538px" width="9" height="5" viewBox="0 0 9 5"><rect x="0.4" y="0.8" width="4.4" height="3" rx="1.5" fill="none" stroke="#7a7a7a" stroke-width="0.7"/><rect x="4" y="0.8" width="4.4" height="3" rx="1.5" fill="none" stroke="#7a7a7a" stroke-width="0.7"/></svg>
<div class="t" style="left:906.6px;top:535.8px;font-family:'Liberation Serif',serif;font-style:italic;font-size:7.5px;line-height:8px;color:#e0e0e0">fx</div>
<div class="a" style="left:913.2px;top:542.2px;width:1.4px;height:0.7px;background:#ddd;"></div>
<svg style="left:920.6px;top:537.4px" width="8" height="6" viewBox="0 0 8 6"><rect x="0.3" y="0.3" width="7.4" height="5.4" fill="#d8d8d8"/><circle cx="4" cy="3" r="1.7" fill="#535353"/></svg>
<svg style="left:934.6px;top:536.8px" width="8" height="7" viewBox="0 0 8 7"><circle cx="3.4" cy="3.4" r="2.8" fill="none" stroke="#d8d8d8" stroke-width="0.8"/><path d="M1.4,5.4 A2.8,2.8 0 0 1 5.4,1.4Z" fill="#d8d8d8"/><rect x="6.6" y="5.6" width="1.3" height="0.7" fill="#ddd"/></svg>
<svg style="left:948px;top:537px" width="8" height="6" viewBox="0 0 8 6"><path d="M0.3,0.3 H3 L3.8,1.2 H7.7 V5.7 H0.3Z" fill="#d0d0d0"/></svg>
<svg style="left:962.4px;top:537px" width="7" height="7" viewBox="0 0 7 7"><path d="M0.6,0.6 H6.2 V6.2 H0.6Z" fill="#d8d8d8"/><path d="M0.6,3.2 H3.2 V6.2 H0.6Z" fill="#535353"/><path d="M1,3.8 H2.8 V5.8 H1Z" fill="#d0d0d0"/></svg>
<svg style="left:976.8px;top:536.6px" width="6" height="8" viewBox="0 0 6 8"><path d="M0.4,1.8 H5.6 M2,1.6 V0.8 H4 V1.6 M1,2.4 L1.3,7.2 H4.7 L5,2.4Z" fill="#a2a2a2" stroke="#a2a2a2" stroke-width="0.6"/></svg>
<div class="a" style="left:996.9px;top:9.6px;width:3.1px;height:535.4px;background:#24222c;background:linear-gradient(180deg,#26242c,#1f2030 40%,#232030 70%,#1d1d2b)"></div>
</body></html>
